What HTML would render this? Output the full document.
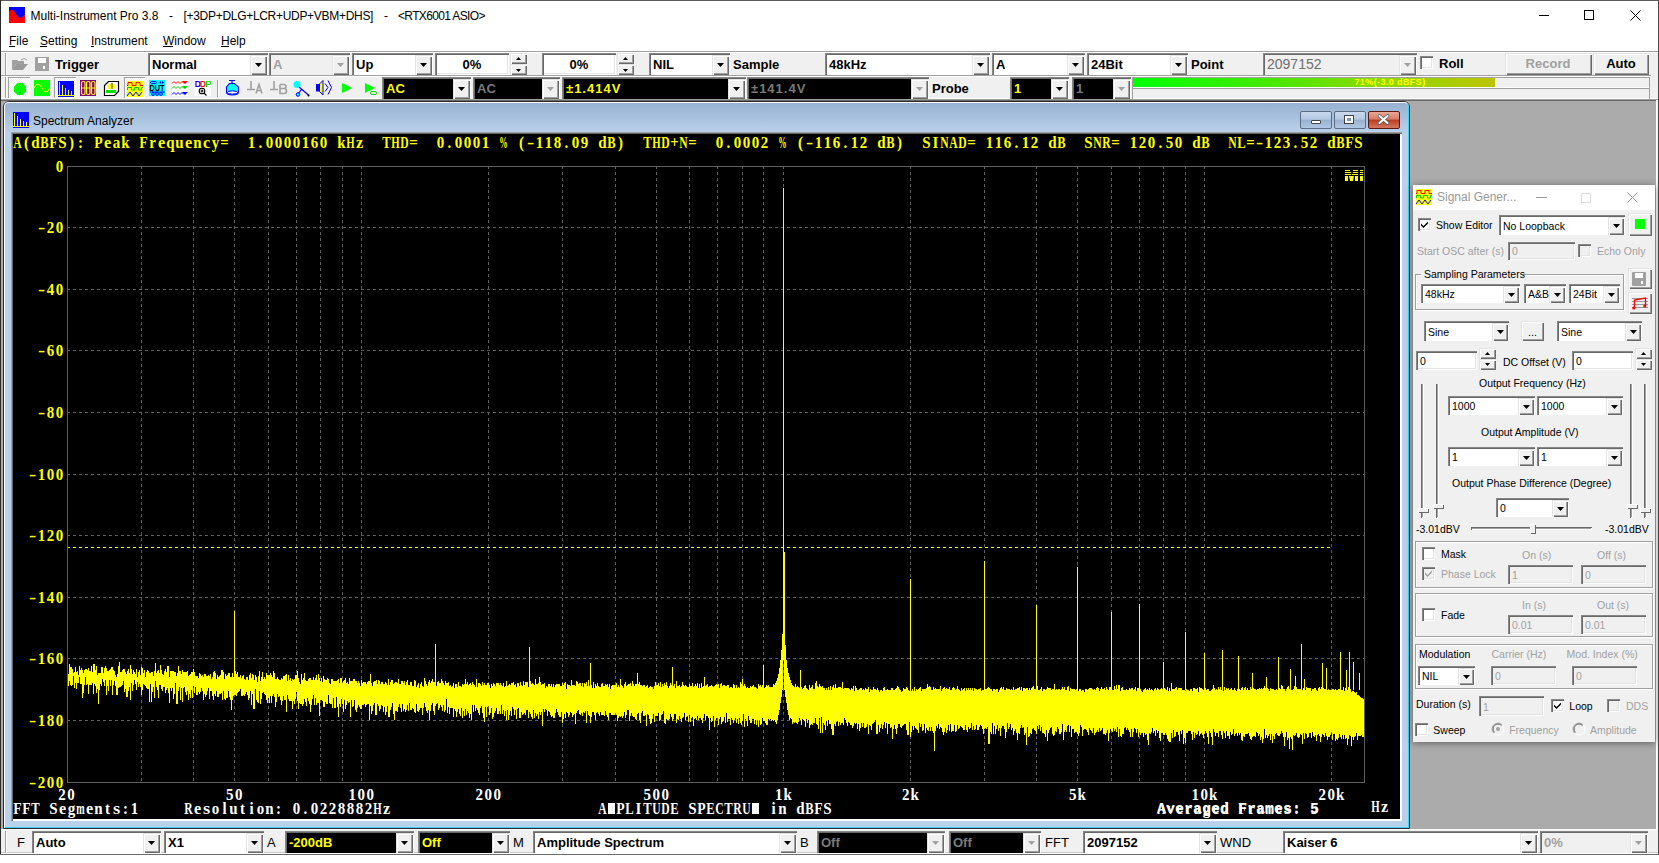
<!DOCTYPE html><html><head><meta charset="utf-8"><style>
html,body{margin:0;padding:0;width:1659px;height:863px;overflow:hidden;background:#fff;position:relative;font-family:"Liberation Sans",sans-serif;}
div{position:absolute;}
</style></head><body>
<div style="left:0px;top:0px;width:1659px;height:855px;background:#fff;"></div>
<div style="left:0px;top:0px;width:1659px;height:1px;background:#5c5c5c;"></div>
<div style="left:0px;top:0px;width:1px;height:855px;background:#2a2a2a;"></div>
<div style="left:1658px;top:0px;width:1px;height:855px;background:#4a4a4a;"></div>
<svg style="position:absolute;left:9px;top:7px;overflow:visible" width="16" height="16" viewBox="0 0 16 16"><rect width="16" height="16" fill="#0000ff"/><path d="M0 5 Q2.5 1.5 4.5 3.5 L9.5 10 Q11 11.5 13 10 L16 7.5 V16 H0 Z" fill="#ff0000"/></svg>
<div style="left:30.50px;top:9.84px;font-family:'Liberation Sans',sans-serif;font-size:12px;line-height:12px;white-space:pre;color:#000;">Multi-Instrument Pro 3.8</div>
<div style="left:169.00px;top:9.84px;font-family:'Liberation Sans',sans-serif;font-size:12px;line-height:12px;white-space:pre;color:#000;">-</div>
<div style="left:183.50px;top:9.84px;font-family:'Liberation Sans',sans-serif;font-size:12px;line-height:12px;white-space:pre;color:#000;letter-spacing:-0.3px;">[+3DP+DLG+LCR+UDP+VBM+DHS]</div>
<div style="left:384.00px;top:9.84px;font-family:'Liberation Sans',sans-serif;font-size:12px;line-height:12px;white-space:pre;color:#000;">-</div>
<div style="left:398.00px;top:9.84px;font-family:'Liberation Sans',sans-serif;font-size:12px;line-height:12px;white-space:pre;color:#000;letter-spacing:-0.65px;">&lt;RTX6001 ASIO&gt;</div>
<div style="left:1539px;top:15px;width:10px;height:1px;background:#000;"></div>
<div style="left:1584px;top:10px;width:10px;height:10px;border:1px solid #000;box-sizing:border-box;"></div>
<svg style="position:absolute;left:1630px;top:10px;overflow:visible" width="11" height="11" viewBox="0 0 11 11"><path d="M0.5 0.5 L10.5 10.5 M10.5 0.5 L0.5 10.5" stroke="#000" stroke-width="1"/></svg>
<div style="left:9.00px;top:34.84px;font-family:'Liberation Sans',sans-serif;font-size:12px;line-height:12px;white-space:pre;color:#000;">File</div>
<div style="left:40.00px;top:34.84px;font-family:'Liberation Sans',sans-serif;font-size:12px;line-height:12px;white-space:pre;color:#000;">Setting</div>
<div style="left:91.00px;top:34.84px;font-family:'Liberation Sans',sans-serif;font-size:12px;line-height:12px;white-space:pre;color:#000;">Instrument</div>
<div style="left:163.00px;top:34.84px;font-family:'Liberation Sans',sans-serif;font-size:12px;line-height:12px;white-space:pre;color:#000;">Window</div>
<div style="left:221.00px;top:34.84px;font-family:'Liberation Sans',sans-serif;font-size:12px;line-height:12px;white-space:pre;color:#000;">Help</div>
<div style="left:9px;top:46px;width:6px;height:1px;background:#000;"></div>
<div style="left:40px;top:46px;width:7px;height:1px;background:#000;"></div>
<div style="left:91px;top:46px;width:3px;height:1px;background:#000;"></div>
<div style="left:163px;top:46px;width:10px;height:1px;background:#000;"></div>
<div style="left:221px;top:46px;width:8px;height:1px;background:#000;"></div>
<div style="left:1px;top:51px;width:1657px;height:1px;background:#a0a0a0;"></div>
<div style="left:1px;top:52px;width:1657px;height:47px;background:#f0f0f0;"></div>
<div style="left:1px;top:52px;width:1657px;height:1px;background:#fff;"></div>
<div style="left:1px;top:75px;width:1650px;height:1px;background:#a0a0a0;"></div>
<div style="left:1px;top:76px;width:1650px;height:1px;background:#fff;"></div>
<div style="left:1px;top:98px;width:1657px;height:1px;background:#fff;"></div>
<div style="left:1px;top:99px;width:1657px;height:1px;background:#a0a0a0;"></div>
<div style="left:5px;top:53px;width:1px;height:22px;background:#a0a0a0;"></div>
<div style="left:6px;top:53px;width:1px;height:22px;background:#fff;"></div>
<div style="left:5px;top:77px;width:1px;height:21px;background:#a0a0a0;"></div>
<div style="left:6px;top:77px;width:1px;height:21px;background:#fff;"></div>
<svg style="position:absolute;left:12px;top:57px;overflow:visible" width="16" height="14" viewBox="0 0 16 14"><path d="M0 3 L5 3 L6 4 L12 4 L12 7 L4 7 L0 13 Z" fill="#a0a0a0"/><path d="M4 7 L16 7 L11 13 L0 13 Z" fill="#9a9a9a"/><path d="M9 3 Q12 0 15 3" stroke="#a0a0a0" fill="none" stroke-width="1"/></svg>
<svg style="position:absolute;left:35px;top:57px;overflow:visible" width="16" height="14" viewBox="0 0 16 14"><rect x="0" y="0" width="14" height="14" fill="#a0a0a0"/><rect x="3" y="1" width="8" height="5" fill="#fff"/><rect x="8" y="9" width="2" height="3" fill="#fff"/></svg>
<div style="left:55.00px;top:58.00px;font-family:'Liberation Sans',sans-serif;font-size:13px;line-height:13px;white-space:pre;font-weight:bold;color:#000;">Trigger</div>
<div style="left:148px;top:53px;width:120px;height:22px;background:#fff;box-shadow:inset 1px 1px 0 #868686, inset 2px 2px 0 #696969, inset -1px 0 0 #fff;"></div>
<div style="left:250px;top:55px;width:17px;height:20px;background:#f0f0f0;box-shadow:inset 1px 1px 0 #e3e3e3, inset 2px 2px 0 #fff, inset -1px -1px 0 #696969, inset -2px -2px 0 #a0a0a0;box-sizing:border-box;"></div>
<svg style="position:absolute;left:255.0px;top:63.0px" width="7" height="4"><path d="M0 0H7L3.5 4Z" fill="#000"/></svg>
<div style="left:152.00px;top:57.68px;font-family:'Liberation Sans',sans-serif;font-size:13px;line-height:13px;white-space:pre;color:#000;letter-spacing:0px;font-weight:bold;">Normal</div>
<div style="left:269px;top:53px;width:81px;height:22px;background:#f0f0f0;box-shadow:inset 1px 1px 0 #868686, inset 2px 2px 0 #696969, inset -1px 0 0 #fff;"></div>
<div style="left:332px;top:55px;width:17px;height:20px;background:#f0f0f0;box-shadow:inset 1px 1px 0 #e3e3e3, inset 2px 2px 0 #fff, inset -1px -1px 0 #696969, inset -2px -2px 0 #a0a0a0;box-sizing:border-box;"></div>
<svg style="position:absolute;left:337.0px;top:63.0px" width="7" height="4"><path d="M0 0H7L3.5 4Z" fill="#a0a0a0"/></svg>
<div style="left:273.00px;top:57.68px;font-family:'Liberation Sans',sans-serif;font-size:13px;line-height:13px;white-space:pre;color:#a0a0a0;letter-spacing:0px;font-weight:bold;">A</div>
<div style="left:352px;top:53px;width:81px;height:22px;background:#fff;box-shadow:inset 1px 1px 0 #868686, inset 2px 2px 0 #696969, inset -1px 0 0 #fff;"></div>
<div style="left:415px;top:55px;width:17px;height:20px;background:#f0f0f0;box-shadow:inset 1px 1px 0 #e3e3e3, inset 2px 2px 0 #fff, inset -1px -1px 0 #696969, inset -2px -2px 0 #a0a0a0;box-sizing:border-box;"></div>
<svg style="position:absolute;left:420.0px;top:63.0px" width="7" height="4"><path d="M0 0H7L3.5 4Z" fill="#000"/></svg>
<div style="left:356.00px;top:57.68px;font-family:'Liberation Sans',sans-serif;font-size:13px;line-height:13px;white-space:pre;color:#000;letter-spacing:0px;font-weight:bold;">Up</div>
<div style="left:435px;top:53px;width:74px;height:22px;background:#fff;border-style:solid;border-width:0;box-shadow:inset 1px 1px 0 #868686, inset 2px 2px 0 #696969, inset -1px -1px 0 #fff, inset -2px -2px 0 #e3e3e3;box-sizing:border-box;"></div>
<div style="left:435.00px;top:58.00px;font-family:'Liberation Sans',sans-serif;font-size:13px;line-height:13px;white-space:pre;width:74px;text-align:center;font-weight:bold;color:#000;">0%</div>
<div style="left:510px;top:53px;width:17px;height:11px;background:#f0f0f0;box-shadow:inset 1px 1px 0 #e3e3e3, inset 2px 2px 0 #fff, inset -1px -1px 0 #696969, inset -2px -2px 0 #a0a0a0;box-sizing:border-box;"></div>
<div style="left:510px;top:64px;width:17px;height:11px;background:#f0f0f0;box-shadow:inset 1px 1px 0 #e3e3e3, inset 2px 2px 0 #fff, inset -1px -1px 0 #696969, inset -2px -2px 0 #a0a0a0;box-sizing:border-box;"></div>
<svg style="position:absolute;left:516px;top:57px;overflow:visible" width="5" height="15" viewBox="0 0 5 15"><path d="M2.5 0 L5 3 L0 3 Z" fill="#000"/><path d="M0 12 L5 12 L2.5 15 Z" fill="#000"/></svg>
<div style="left:542px;top:53px;width:74px;height:22px;background:#fff;border-style:solid;border-width:0;box-shadow:inset 1px 1px 0 #868686, inset 2px 2px 0 #696969, inset -1px -1px 0 #fff, inset -2px -2px 0 #e3e3e3;box-sizing:border-box;"></div>
<div style="left:542.00px;top:58.00px;font-family:'Liberation Sans',sans-serif;font-size:13px;line-height:13px;white-space:pre;width:74px;text-align:center;font-weight:bold;color:#000;">0%</div>
<div style="left:617px;top:53px;width:17px;height:11px;background:#f0f0f0;box-shadow:inset 1px 1px 0 #e3e3e3, inset 2px 2px 0 #fff, inset -1px -1px 0 #696969, inset -2px -2px 0 #a0a0a0;box-sizing:border-box;"></div>
<div style="left:617px;top:64px;width:17px;height:11px;background:#f0f0f0;box-shadow:inset 1px 1px 0 #e3e3e3, inset 2px 2px 0 #fff, inset -1px -1px 0 #696969, inset -2px -2px 0 #a0a0a0;box-sizing:border-box;"></div>
<svg style="position:absolute;left:623px;top:57px;overflow:visible" width="5" height="15" viewBox="0 0 5 15"><path d="M2.5 0 L5 3 L0 3 Z" fill="#000"/><path d="M0 12 L5 12 L2.5 15 Z" fill="#000"/></svg>
<div style="left:649px;top:53px;width:81px;height:22px;background:#fff;box-shadow:inset 1px 1px 0 #868686, inset 2px 2px 0 #696969, inset -1px 0 0 #fff;"></div>
<div style="left:712px;top:55px;width:17px;height:20px;background:#f0f0f0;box-shadow:inset 1px 1px 0 #e3e3e3, inset 2px 2px 0 #fff, inset -1px -1px 0 #696969, inset -2px -2px 0 #a0a0a0;box-sizing:border-box;"></div>
<svg style="position:absolute;left:717.0px;top:63.0px" width="7" height="4"><path d="M0 0H7L3.5 4Z" fill="#000"/></svg>
<div style="left:653.00px;top:57.68px;font-family:'Liberation Sans',sans-serif;font-size:13px;line-height:13px;white-space:pre;color:#000;letter-spacing:0px;font-weight:bold;">NIL</div>
<div style="left:733.00px;top:58.00px;font-family:'Liberation Sans',sans-serif;font-size:13px;line-height:13px;white-space:pre;font-weight:bold;color:#000;">Sample</div>
<div style="left:825px;top:53px;width:165px;height:22px;background:#fff;box-shadow:inset 1px 1px 0 #868686, inset 2px 2px 0 #696969, inset -1px 0 0 #fff;"></div>
<div style="left:972px;top:55px;width:17px;height:20px;background:#f0f0f0;box-shadow:inset 1px 1px 0 #e3e3e3, inset 2px 2px 0 #fff, inset -1px -1px 0 #696969, inset -2px -2px 0 #a0a0a0;box-sizing:border-box;"></div>
<svg style="position:absolute;left:977.0px;top:63.0px" width="7" height="4"><path d="M0 0H7L3.5 4Z" fill="#000"/></svg>
<div style="left:829.00px;top:57.68px;font-family:'Liberation Sans',sans-serif;font-size:13px;line-height:13px;white-space:pre;color:#000;letter-spacing:0px;font-weight:bold;">48kHz</div>
<div style="left:992px;top:53px;width:93px;height:22px;background:#fff;box-shadow:inset 1px 1px 0 #868686, inset 2px 2px 0 #696969, inset -1px 0 0 #fff;"></div>
<div style="left:1067px;top:55px;width:17px;height:20px;background:#f0f0f0;box-shadow:inset 1px 1px 0 #e3e3e3, inset 2px 2px 0 #fff, inset -1px -1px 0 #696969, inset -2px -2px 0 #a0a0a0;box-sizing:border-box;"></div>
<svg style="position:absolute;left:1072.0px;top:63.0px" width="7" height="4"><path d="M0 0H7L3.5 4Z" fill="#000"/></svg>
<div style="left:996.00px;top:57.68px;font-family:'Liberation Sans',sans-serif;font-size:13px;line-height:13px;white-space:pre;color:#000;letter-spacing:0px;font-weight:bold;">A</div>
<div style="left:1087px;top:53px;width:101px;height:22px;background:#fff;box-shadow:inset 1px 1px 0 #868686, inset 2px 2px 0 #696969, inset -1px 0 0 #fff;"></div>
<div style="left:1170px;top:55px;width:17px;height:20px;background:#f0f0f0;box-shadow:inset 1px 1px 0 #e3e3e3, inset 2px 2px 0 #fff, inset -1px -1px 0 #696969, inset -2px -2px 0 #a0a0a0;box-sizing:border-box;"></div>
<svg style="position:absolute;left:1175.0px;top:63.0px" width="7" height="4"><path d="M0 0H7L3.5 4Z" fill="#000"/></svg>
<div style="left:1091.00px;top:57.68px;font-family:'Liberation Sans',sans-serif;font-size:13px;line-height:13px;white-space:pre;color:#000;letter-spacing:0px;font-weight:bold;">24Bit</div>
<div style="left:1191.00px;top:58.00px;font-family:'Liberation Sans',sans-serif;font-size:13px;line-height:13px;white-space:pre;font-weight:bold;color:#000;">Point</div>
<div style="left:1263px;top:53px;width:154px;height:22px;background:#f0f0f0;box-shadow:inset 1px 1px 0 #868686, inset 2px 2px 0 #696969, inset -1px 0 0 #fff;"></div>
<div style="left:1399px;top:55px;width:17px;height:20px;background:#f0f0f0;box-shadow:inset 1px 1px 0 #e3e3e3, inset 2px 2px 0 #fff, inset -1px -1px 0 #696969, inset -2px -2px 0 #a0a0a0;box-sizing:border-box;"></div>
<svg style="position:absolute;left:1404.0px;top:63.0px" width="7" height="4"><path d="M0 0H7L3.5 4Z" fill="#a0a0a0"/></svg>
<div style="left:1267.00px;top:57.19px;font-family:'Liberation Sans',sans-serif;font-size:14px;line-height:14px;white-space:pre;color:#6d6d6d;letter-spacing:0px;">2097152</div>
<div style="left:1420px;top:56px;width:13px;height:13px;background:#fff;border-style:solid;border-width:0;box-shadow:inset 1px 1px 0 #868686, inset 2px 2px 0 #696969, inset -1px -1px 0 #fff, inset -2px -2px 0 #e3e3e3;box-sizing:border-box;"></div>
<div style="left:1439.00px;top:57.00px;font-family:'Liberation Sans',sans-serif;font-size:13px;line-height:13px;white-space:pre;font-weight:bold;color:#000;">Roll</div>
<div style="left:1505px;top:53px;width:87px;height:22px;background:#f0f0f0;box-shadow:inset 1px 1px 0 #e3e3e3, inset 2px 2px 0 #fff, inset -1px -1px 0 #696969, inset -2px -2px 0 #a0a0a0;box-sizing:border-box;"></div>
<div style="left:1504.50px;top:57.00px;font-family:'Liberation Sans',sans-serif;font-size:13px;line-height:13px;white-space:pre;width:87px;text-align:center;font-weight:bold;color:#a0a0a0;">Record</div>
<div style="left:1593px;top:53px;width:56px;height:22px;background:#f0f0f0;box-shadow:inset 1px 1px 0 #e3e3e3, inset 2px 2px 0 #fff, inset -1px -1px 0 #696969, inset -2px -2px 0 #a0a0a0;box-sizing:border-box;"></div>
<div style="left:1593.00px;top:57.00px;font-family:'Liberation Sans',sans-serif;font-size:13px;line-height:13px;white-space:pre;width:56px;text-align:center;font-weight:bold;color:#000;">Auto</div>
<div style="left:8px;top:77px;width:22px;height:21px;background:repeating-conic-gradient(#f0f0f0 0% 25%, #fff 0% 50%) 0 0/2px 2px;box-shadow:inset 1px 1px 0 #a0a0a0, inset -1px -1px 0 #fff;"></div>
<svg style="position:absolute;left:14px;top:83px;overflow:visible" width="12" height="12" viewBox="0 0 12 12"><path d="M3.5 0 L8.5 0 L12 3.5 L12 8.5 L8.5 12 L3.5 12 L0 8.5 L0 3.5 Z" fill="#00ff00"/></svg>
<svg style="position:absolute;left:34px;top:80px;overflow:visible" width="16" height="16" viewBox="0 0 16 16"><rect width="16" height="16" fill="#00ff00"/><path d="M0 8 Q4 0 8 8 T16 8" stroke="#ffff00" fill="none" stroke-width="1"/></svg>
<div style="left:54px;top:77px;width:22px;height:21px;background:repeating-conic-gradient(#f0f0f0 0% 25%, #fff 0% 50%) 0 0/2px 2px;box-shadow:inset 1px 1px 0 #a0a0a0, inset -1px -1px 0 #fff;"></div>
<svg style="position:absolute;left:58px;top:81px;overflow:visible" width="16" height="16" viewBox="0 0 16 16"><rect width="16" height="16" fill="#0000ff"/><path d="M1.5 1 V14 M4.5 4 V14 M7.5 7 V14 M10.5 9 V14 M13.5 10 V14 M0 14.5 H16" stroke="#ffff00" stroke-width="1"/></svg>
<svg style="position:absolute;left:80px;top:80px;overflow:visible" width="16" height="16" viewBox="0 0 16 16"><rect width="16" height="16" fill="#800080"/><rect x="1.5" y="1.5" width="3.5" height="13" rx="1.5" stroke="#ffff00" fill="none" stroke-width="1.2"/><rect x="6.5" y="1.5" width="3.5" height="13" rx="1.5" stroke="#ffff00" fill="none" stroke-width="1.2"/><rect x="11.5" y="1.5" width="3.5" height="13" rx="1.5" stroke="#ffff00" fill="none" stroke-width="1.2"/><path d="M1.5 8H5M6.5 8H10M11.5 8H15" stroke="#ffff00" stroke-width="1.2"/></svg>
<svg style="position:absolute;left:104px;top:81px;overflow:visible" width="15" height="15" viewBox="0 0 15 15"><path d="M4.5 0.5 H14.5 V10.5 L10.5 14.5 H0.5 V4.5 Z" fill="#fff" stroke="#000" stroke-width="1.2"/><path d="M5 3 L8 2 L10 3 L12 6 L10 8 L4 8 L3 6 Z" fill="#ffff00"/><path d="M8 2 L8 8" stroke="#000" stroke-width="0.8"/><path d="M2 9 H12 V12 H2 Z" fill="#00e000"/></svg>
<div style="left:124px;top:77px;width:21px;height:21px;background:repeating-conic-gradient(#f0f0f0 0% 25%, #fff 0% 50%) 0 0/2px 2px;box-shadow:inset 1px 1px 0 #a0a0a0, inset -1px -1px 0 #fff;"></div>
<svg style="position:absolute;left:127px;top:81px;overflow:visible" width="16" height="16" viewBox="0 0 16 16"><rect width="16" height="16" fill="#ffff00"/><path d="M0 4.5 H1 V1.5 H5 V4.5 H9 V1.5 H13 V4.5 H16" stroke="#ff0000" fill="none"/><path d="M0.5 9 V6.5 H4.5 V9 H7.5 V6.5 H11.5 V9 H14.5 V6.5 H16" stroke="#00d000" fill="none"/><path d="M0 15 L3 11 L6 15 L9 11 L12 15 L15 11" stroke="#0000ff" fill="none"/></svg>
<svg style="position:absolute;left:149px;top:80px;overflow:visible" width="16" height="16" viewBox="0 0 16 16"><rect width="16" height="16" fill="#00ffff"/><rect x="1.5" y="1.5" width="6" height="2" rx="1" fill="none" stroke="#0000ff"/><path d="M10 2.5 L12 1 V4 Z M15 2.5 L13 1 V4 Z" fill="#0000ff"/><text x="8" y="11" font-family="Liberation Sans" font-size="8.5" font-weight="bold" fill="#000" text-anchor="middle" textLength="15" lengthAdjust="spacingAndGlyphs">DUT</text><rect x="1" y="11.5" width="15" height="1" fill="#0000ff"/><ellipse cx="4" cy="14" rx="1.3" ry="1.5" fill="none" stroke="#0000ff"/><ellipse cx="8" cy="14" rx="1.3" ry="1.5" fill="none" stroke="#0000ff"/><ellipse cx="12" cy="14" rx="1.3" ry="1.5" fill="none" stroke="#0000ff"/></svg>
<svg style="position:absolute;left:172px;top:80px;overflow:visible" width="16" height="16" viewBox="0 0 16 16"><rect width="16" height="16" fill="#fff"/><path d="M0 3.5 L2 1.5 L4 3.5 L6 1.5 L8 3.5 L10 1.5 L12 3.5" stroke="#ff0000" fill="none"/><path d="M10 1 H16 L13 4 Z" fill="#ff0000"/><path d="M0 8.5 L2 6.5 L4 8.5 L6 6.5 L8 8.5 L10 6.5 L12 8.5" stroke="#00d000" fill="none"/><path d="M10 6 H16 L13 9 Z" fill="#00d000"/><path d="M0 14.5 L2 12.5 L4 14.5 L6 12.5 L8 14.5 L10 12.5 L12 14.5" stroke="#0000ff" fill="none"/><path d="M10 12 H16 L13 15 Z" fill="#0000ff"/></svg>
<svg style="position:absolute;left:195px;top:80px;overflow:visible" width="16" height="16" viewBox="0 0 16 16"><rect width="16" height="16" fill="#fff"/><path d="M1 1.5 H3 Q5 1.5 5 4 Q5 6.5 3 6.5 H1 Z" fill="none" stroke="#0000ff" stroke-width="1.2"/><path d="M6 1.5 H8 Q10 1.5 10 4 Q10 6.5 8 6.5 H6 Z" fill="none" stroke="#ff0000" stroke-width="1.2"/><path d="M11.5 7 V1.5 H14 Q15.5 1.5 15.5 3 Q15.5 4.5 14 4.5 H11.5" fill="none" stroke="#00e000" stroke-width="1.2"/><circle cx="7" cy="11" r="2.8" stroke="#000" fill="none" stroke-width="1.1"/><path d="M9 13 L11.5 15.5 M5.5 11 H8.5 M7 9.5 V12.5" stroke="#000" stroke-width="1.1"/></svg>
<div style="left:217px;top:80px;width:1px;height:17px;background:#a0a0a0;"></div>
<div style="left:218px;top:80px;width:1px;height:17px;background:#fff;"></div>
<svg style="position:absolute;left:226px;top:80px;overflow:visible" width="13" height="16" viewBox="0 0 13 16"><path d="M3 0.5 H9 M6 0.5 V3.5" stroke="#0000ff" stroke-width="1.2"/><path d="M3.5 3.5 H8.5 L12.5 7 V12 Q12.5 15 6 15 Q0.5 15 0.5 12 V7 Z" fill="#00ffff" stroke="#0000ff" stroke-width="1.1"/><ellipse cx="6.5" cy="12.5" rx="5" ry="1.6" fill="#ffffe0" stroke="#0000ff" stroke-width="1"/></svg>
<svg style="position:absolute;left:247px;top:81px;overflow:visible" width="17" height="13" viewBox="0 0 17 13"><path d="M4 0 V8 M0 8.5 H8" stroke="#a0a0a0" stroke-width="1.6"/><path d="M9 12.5 L12 3.5 L15 12.5 M10 9.5 H14" stroke="#a0a0a0" stroke-width="1.6" fill="none"/></svg>
<svg style="position:absolute;left:270px;top:81px;overflow:visible" width="17" height="13" viewBox="0 0 17 13"><path d="M4 0 V8 M0 8.5 H8" stroke="#a0a0a0" stroke-width="1.6"/><path d="M10 3.5 H14 Q16 3.5 16 5.5 Q16 7.5 14 7.5 H10 M10 7.5 H14.5 Q16.5 7.5 16.5 10 Q16.5 12.5 14.5 12.5 H10 Z M10 3.5 V12.5" stroke="#a0a0a0" stroke-width="1.6" fill="none"/></svg>
<svg style="position:absolute;left:293px;top:80px;overflow:visible" width="17" height="17" viewBox="0 0 17 17"><circle cx="4" cy="4.5" r="3.5" fill="#00ffff"/><path d="M6 7 L16 15.5 M8.5 9.5 L5 14" stroke="#0000ff" stroke-width="1.2"/><circle cx="15.5" cy="15.5" r="1" fill="#000"/><circle cx="5" cy="14.5" r="1.8" fill="#00ffff" stroke="#0000ff"/></svg>
<svg style="position:absolute;left:316px;top:80px;overflow:visible" width="17" height="16" viewBox="0 0 17 16"><rect x="0" y="4" width="3.5" height="7.5" fill="#0000ff"/><path d="M3.5 4 L7 0.5 V15 L3.5 11.5 Z" fill="#ffff00" stroke="#0000ff" stroke-width="1"/><path d="M9 3.5 L12 7.5 L9 11.5 M12 0.5 L15.5 7.5 L12 14.5" stroke="#0000ff" fill="none" stroke-width="1"/></svg>
<svg style="position:absolute;left:342px;top:83px;overflow:visible" width="11" height="10" viewBox="0 0 11 10"><path d="M0 0 L10 5 L0 10 Z" fill="#00ff00"/></svg>
<svg style="position:absolute;left:365px;top:83px;overflow:visible" width="12" height="12" viewBox="0 0 12 12"><path d="M0 0 L10 5 L0 10 Z" fill="#00ff00"/><rect x="5.5" y="8.5" width="6" height="3" rx="1.5" fill="none" stroke="#00e000" stroke-width="1"/></svg>
<div style="left:382px;top:77px;width:89px;height:22px;background:#000;box-shadow:inset 1px 1px 0 #868686, inset 2px 2px 0 #696969, inset -1px 0 0 #fff;"></div>
<div style="left:453px;top:79px;width:17px;height:20px;background:#f0f0f0;box-shadow:inset 1px 1px 0 #e3e3e3, inset 2px 2px 0 #fff, inset -1px -1px 0 #696969, inset -2px -2px 0 #a0a0a0;box-sizing:border-box;"></div>
<svg style="position:absolute;left:458.0px;top:87.0px" width="7" height="4"><path d="M0 0H7L3.5 4Z" fill="#000"/></svg>
<div style="left:386.00px;top:81.68px;font-family:'Liberation Sans',sans-serif;font-size:13px;line-height:13px;white-space:pre;color:#ffff00;letter-spacing:0px;font-weight:bold;">AC</div>
<div style="left:473px;top:77px;width:87px;height:22px;background:#000;box-shadow:inset 1px 1px 0 #868686, inset 2px 2px 0 #696969, inset -1px 0 0 #fff;"></div>
<div style="left:542px;top:79px;width:17px;height:20px;background:#f0f0f0;box-shadow:inset 1px 1px 0 #e3e3e3, inset 2px 2px 0 #fff, inset -1px -1px 0 #696969, inset -2px -2px 0 #a0a0a0;box-sizing:border-box;"></div>
<svg style="position:absolute;left:547.0px;top:87.0px" width="7" height="4"><path d="M0 0H7L3.5 4Z" fill="#a0a0a0"/></svg>
<div style="left:477.00px;top:81.68px;font-family:'Liberation Sans',sans-serif;font-size:13px;line-height:13px;white-space:pre;color:#7a7a7a;letter-spacing:0px;font-weight:bold;">AC</div>
<div style="left:562px;top:77px;width:184px;height:22px;background:#000;box-shadow:inset 1px 1px 0 #868686, inset 2px 2px 0 #696969, inset -1px 0 0 #fff;"></div>
<div style="left:728px;top:79px;width:17px;height:20px;background:#f0f0f0;box-shadow:inset 1px 1px 0 #e3e3e3, inset 2px 2px 0 #fff, inset -1px -1px 0 #696969, inset -2px -2px 0 #a0a0a0;box-sizing:border-box;"></div>
<svg style="position:absolute;left:733.0px;top:87.0px" width="7" height="4"><path d="M0 0H7L3.5 4Z" fill="#000"/></svg>
<div style="left:566.00px;top:81.68px;font-family:'Liberation Sans',sans-serif;font-size:13px;line-height:13px;white-space:pre;color:#ffff00;letter-spacing:1px;font-weight:bold;">±1.414V</div>
<div style="left:747px;top:77px;width:182px;height:22px;background:#000;box-shadow:inset 1px 1px 0 #868686, inset 2px 2px 0 #696969, inset -1px 0 0 #fff;"></div>
<div style="left:911px;top:79px;width:17px;height:20px;background:#f0f0f0;box-shadow:inset 1px 1px 0 #e3e3e3, inset 2px 2px 0 #fff, inset -1px -1px 0 #696969, inset -2px -2px 0 #a0a0a0;box-sizing:border-box;"></div>
<svg style="position:absolute;left:916.0px;top:87.0px" width="7" height="4"><path d="M0 0H7L3.5 4Z" fill="#a0a0a0"/></svg>
<div style="left:751.00px;top:81.68px;font-family:'Liberation Sans',sans-serif;font-size:13px;line-height:13px;white-space:pre;color:#7a7a7a;letter-spacing:1px;font-weight:bold;">±141.4V</div>
<div style="left:932.00px;top:82.00px;font-family:'Liberation Sans',sans-serif;font-size:13px;line-height:13px;white-space:pre;font-weight:bold;color:#000;">Probe</div>
<div style="left:1010px;top:77px;width:59px;height:22px;background:#000;box-shadow:inset 1px 1px 0 #868686, inset 2px 2px 0 #696969, inset -1px 0 0 #fff;"></div>
<div style="left:1051px;top:79px;width:17px;height:20px;background:#f0f0f0;box-shadow:inset 1px 1px 0 #e3e3e3, inset 2px 2px 0 #fff, inset -1px -1px 0 #696969, inset -2px -2px 0 #a0a0a0;box-sizing:border-box;"></div>
<svg style="position:absolute;left:1056.0px;top:87.0px" width="7" height="4"><path d="M0 0H7L3.5 4Z" fill="#000"/></svg>
<div style="left:1014.00px;top:81.68px;font-family:'Liberation Sans',sans-serif;font-size:13px;line-height:13px;white-space:pre;color:#ffff00;letter-spacing:0px;font-weight:bold;">1</div>
<div style="left:1072px;top:77px;width:59px;height:22px;background:#000;box-shadow:inset 1px 1px 0 #868686, inset 2px 2px 0 #696969, inset -1px 0 0 #fff;"></div>
<div style="left:1113px;top:79px;width:17px;height:20px;background:#f0f0f0;box-shadow:inset 1px 1px 0 #e3e3e3, inset 2px 2px 0 #fff, inset -1px -1px 0 #696969, inset -2px -2px 0 #a0a0a0;box-sizing:border-box;"></div>
<svg style="position:absolute;left:1118.0px;top:87.0px" width="7" height="4"><path d="M0 0H7L3.5 4Z" fill="#a0a0a0"/></svg>
<div style="left:1076.00px;top:81.68px;font-family:'Liberation Sans',sans-serif;font-size:13px;line-height:13px;white-space:pre;color:#7a7a7a;letter-spacing:0px;font-weight:bold;">1</div>
<div style="left:1132px;top:77px;width:518px;height:22px;background:#f0f0f0;border-left:1px solid #a0a0a0;border-right:1px solid #a0a0a0;box-sizing:border-box;"></div>
<div style="left:1132px;top:77px;width:518px;height:1px;background:#a0a0a0;"></div>
<div style="left:1133px;top:87px;width:516px;height:1px;background:#fff;"></div>
<div style="left:1132px;top:88px;width:518px;height:1px;background:#a0a0a0;"></div>
<div style="left:1133px;top:98px;width:516px;height:1px;background:#fff;"></div>
<div style="left:1133px;top:78px;width:362px;height:9px;background:linear-gradient(to right,#00ff00,#40ea00 35%,#90d800 70%,#bcc400);"></div>
<div style="left:1330.00px;top:78.38px;font-family:'Liberation Sans',sans-serif;font-size:9px;line-height:9px;white-space:pre;width:120px;text-align:center;color:#ffff00;font-weight:bold;letter-spacing:0.4px;">71%(-3.0 dBFS)</div>
<div style="left:1px;top:100px;width:1657px;height:729px;background:#ababab;"></div>
<div style="left:1px;top:100px;width:1657px;height:1px;background:#696969;"></div>
<div style="left:1656px;top:100px;width:2px;height:729px;background:#f0f0f0;"></div>
<div style="left:1656px;top:100px;width:1px;height:729px;background:#fff;"></div>
<div style="left:3px;top:101px;width:1407px;height:728px;background:#b9d1ea;border-radius:6px 6px 0 0;"></div>
<div style="left:3px;top:101px;width:1407px;height:728px;border:1px solid #2b2b2b;box-sizing:border-box;border-radius:6px 6px 0 0;"></div>
<div style="left:4px;top:102px;width:1405px;height:726px;border:1px solid #fff;border-right-color:#3ad2f6;border-bottom-color:#3ad2f6;box-sizing:border-box;border-radius:5px 5px 0 0;"></div>
<div style="left:5px;top:103px;width:1403px;height:29px;background:linear-gradient(#97b1d1,#b8d0ea);border-radius:4px 4px 0 0;"></div>
<div style="left:5px;top:132px;width:1401px;height:690px;background:#b9d1ea;"></div>
<svg style="position:absolute;left:13px;top:112px;overflow:visible" width="16" height="16" viewBox="0 0 16 16"><rect width="16" height="16" fill="#0000ff"/><path d="M1.5 1 V14 M4.5 4 V14 M7.5 7 V14 M10.5 9 V14 M13.5 10 V14 M0 14.5 H16" stroke="#ffff00" stroke-width="1"/></svg>
<div style="left:33.00px;top:114.84px;font-family:'Liberation Sans',sans-serif;font-size:12px;line-height:12px;white-space:pre;color:#000;">Spectrum Analyzer</div>
<div style="left:1300px;top:111px;width:32px;height:18px;background:linear-gradient(#c9daee 0%,#b4c9e3 45%,#98b1d0 50%,#afc7e3 100%);border:1px solid #5a6b82;box-sizing:border-box;border-radius:2px;"></div>
<div style="left:1334px;top:111px;width:32px;height:18px;background:linear-gradient(#c9daee 0%,#b4c9e3 45%,#98b1d0 50%,#afc7e3 100%);border:1px solid #5a6b82;box-sizing:border-box;border-radius:2px;"></div>
<div style="left:1368px;top:111px;width:32px;height:18px;background:linear-gradient(#e9a99a 0%,#d57b66 45%,#b83a22 50%,#d57961 100%);border:1px solid #5a1a12;box-sizing:border-box;border-radius:2px;"></div>
<div style="left:1311px;top:120px;width:10px;height:4px;background:#fff;border:1px solid #444;box-sizing:border-box;border-radius:1px;"></div>
<div style="left:1344px;top:115px;width:10px;height:9px;background:#fff;border:1px solid #444;box-sizing:border-box;"></div>
<div style="left:1347px;top:118px;width:4px;height:3px;background:#7b95b8;"></div>
<svg style="position:absolute;left:1377px;top:114px;overflow:visible" width="13" height="11" viewBox="0 0 13 11"><path d="M2.5 2 L10.5 9 M10.5 2 L2.5 9" stroke="#555" stroke-width="3.6" stroke-linecap="round"/><path d="M2.5 2 L10.5 9 M10.5 2 L2.5 9" stroke="#fff" stroke-width="2.2" stroke-linecap="round"/></svg>
<div style="left:11px;top:132px;width:1391px;height:689px;background:#000;box-shadow:inset 1px 1px 0 #a0a0a0, inset 2px 2px 0 #696969, inset -1px -1px 0 #fff, inset -2px -2px 0 #fff;box-sizing:border-box;"></div>
<div style="left:13px;top:134px;width:1387px;height:685px;background:#000;"></div>
<svg style="position:absolute;left:0;top:0;overflow:visible" width="1" height="1"><text y="148" font-family="Liberation Serif" font-size="15" font-weight="bold" fill="#ffff00" transform="translate(0 148) scale(1 1.08) translate(0 -148)"><tspan x="13.30" textLength="8.4" lengthAdjust="spacingAndGlyphs">A</tspan><tspan x="24.00">(</tspan><tspan x="31.33">d</tspan><tspan x="40.30" textLength="8.4" lengthAdjust="spacingAndGlyphs">B</tspan><tspan x="49.30" textLength="8.4" lengthAdjust="spacingAndGlyphs">F</tspan><tspan x="58.33">S</tspan><tspan x="69.00">)</tspan><tspan x="78.00">:</tspan><tspan x="94.30" textLength="8.4" lengthAdjust="spacingAndGlyphs">P</tspan><tspan x="103.90" textLength="7.2" lengthAdjust="spacingAndGlyphs">e</tspan><tspan x="112.75">a</tspan><tspan x="121.33">k</tspan><tspan x="139.30" textLength="8.4" lengthAdjust="spacingAndGlyphs">F</tspan><tspan x="149.17">r</tspan><tspan x="157.90" textLength="7.2" lengthAdjust="spacingAndGlyphs">e</tspan><tspan x="166.33">q</tspan><tspan x="175.33">u</tspan><tspan x="184.90" textLength="7.2" lengthAdjust="spacingAndGlyphs">e</tspan><tspan x="193.33">n</tspan><tspan x="202.90" textLength="7.2" lengthAdjust="spacingAndGlyphs">c</tspan><tspan x="211.75">y</tspan><tspan x="220.30" textLength="8.4" lengthAdjust="spacingAndGlyphs">=</tspan><tspan x="247.75">1</tspan><tspan x="258.62">.</tspan><tspan x="265.75">0</tspan><tspan x="274.75">0</tspan><tspan x="283.75">0</tspan><tspan x="292.75">0</tspan><tspan x="301.75">1</tspan><tspan x="310.75">6</tspan><tspan x="319.75">0</tspan><tspan x="337.33">k</tspan><tspan x="346.30" textLength="8.4" lengthAdjust="spacingAndGlyphs">H</tspan><tspan x="355.90" textLength="7.2" lengthAdjust="spacingAndGlyphs">z</tspan><tspan x="382.30" textLength="8.4" lengthAdjust="spacingAndGlyphs">T</tspan><tspan x="391.30" textLength="8.4" lengthAdjust="spacingAndGlyphs">H</tspan><tspan x="400.30" textLength="8.4" lengthAdjust="spacingAndGlyphs">D</tspan><tspan x="409.30" textLength="8.4" lengthAdjust="spacingAndGlyphs">=</tspan><tspan x="436.75">0</tspan><tspan x="447.62">.</tspan><tspan x="454.75">0</tspan><tspan x="463.75">0</tspan><tspan x="472.75">0</tspan><tspan x="481.75">1</tspan><tspan x="499.30" textLength="8.4" lengthAdjust="spacingAndGlyphs">%</tspan><tspan x="519.00">(</tspan><tspan x="526.90" textLength="7.2" lengthAdjust="spacingAndGlyphs">-</tspan><tspan x="535.75">1</tspan><tspan x="544.75">1</tspan><tspan x="553.75">8</tspan><tspan x="564.62">.</tspan><tspan x="571.75">0</tspan><tspan x="580.75">9</tspan><tspan x="598.33">d</tspan><tspan x="607.30" textLength="8.4" lengthAdjust="spacingAndGlyphs">B</tspan><tspan x="618.00">)</tspan><tspan x="643.30" textLength="8.4" lengthAdjust="spacingAndGlyphs">T</tspan><tspan x="652.30" textLength="8.4" lengthAdjust="spacingAndGlyphs">H</tspan><tspan x="661.30" textLength="8.4" lengthAdjust="spacingAndGlyphs">D</tspan><tspan x="670.30" textLength="8.4" lengthAdjust="spacingAndGlyphs">+</tspan><tspan x="679.30" textLength="8.4" lengthAdjust="spacingAndGlyphs">N</tspan><tspan x="688.30" textLength="8.4" lengthAdjust="spacingAndGlyphs">=</tspan><tspan x="715.75">0</tspan><tspan x="726.62">.</tspan><tspan x="733.75">0</tspan><tspan x="742.75">0</tspan><tspan x="751.75">0</tspan><tspan x="760.75">2</tspan><tspan x="778.30" textLength="8.4" lengthAdjust="spacingAndGlyphs">%</tspan><tspan x="798.00">(</tspan><tspan x="805.90" textLength="7.2" lengthAdjust="spacingAndGlyphs">-</tspan><tspan x="814.75">1</tspan><tspan x="823.75">1</tspan><tspan x="832.75">6</tspan><tspan x="843.62">.</tspan><tspan x="850.75">1</tspan><tspan x="859.75">2</tspan><tspan x="877.33">d</tspan><tspan x="886.30" textLength="8.4" lengthAdjust="spacingAndGlyphs">B</tspan><tspan x="897.00">)</tspan><tspan x="922.33">S</tspan><tspan x="932.58">I</tspan><tspan x="940.30" textLength="8.4" lengthAdjust="spacingAndGlyphs">N</tspan><tspan x="949.30" textLength="8.4" lengthAdjust="spacingAndGlyphs">A</tspan><tspan x="958.30" textLength="8.4" lengthAdjust="spacingAndGlyphs">D</tspan><tspan x="967.30" textLength="8.4" lengthAdjust="spacingAndGlyphs">=</tspan><tspan x="985.75">1</tspan><tspan x="994.75">1</tspan><tspan x="1003.75">6</tspan><tspan x="1014.62">.</tspan><tspan x="1021.75">1</tspan><tspan x="1030.75">2</tspan><tspan x="1048.33">d</tspan><tspan x="1057.30" textLength="8.4" lengthAdjust="spacingAndGlyphs">B</tspan><tspan x="1084.33">S</tspan><tspan x="1093.30" textLength="8.4" lengthAdjust="spacingAndGlyphs">N</tspan><tspan x="1102.30" textLength="8.4" lengthAdjust="spacingAndGlyphs">R</tspan><tspan x="1111.30" textLength="8.4" lengthAdjust="spacingAndGlyphs">=</tspan><tspan x="1129.75">1</tspan><tspan x="1138.75">2</tspan><tspan x="1147.75">0</tspan><tspan x="1158.62">.</tspan><tspan x="1165.75">5</tspan><tspan x="1174.75">0</tspan><tspan x="1192.33">d</tspan><tspan x="1201.30" textLength="8.4" lengthAdjust="spacingAndGlyphs">B</tspan><tspan x="1228.30" textLength="8.4" lengthAdjust="spacingAndGlyphs">N</tspan><tspan x="1237.30" textLength="8.4" lengthAdjust="spacingAndGlyphs">L</tspan><tspan x="1246.30" textLength="8.4" lengthAdjust="spacingAndGlyphs">=</tspan><tspan x="1255.90" textLength="7.2" lengthAdjust="spacingAndGlyphs">-</tspan><tspan x="1264.75">1</tspan><tspan x="1273.75">2</tspan><tspan x="1282.75">3</tspan><tspan x="1293.62">.</tspan><tspan x="1300.75">5</tspan><tspan x="1309.75">2</tspan><tspan x="1327.33">d</tspan><tspan x="1336.30" textLength="8.4" lengthAdjust="spacingAndGlyphs">B</tspan><tspan x="1345.30" textLength="8.4" lengthAdjust="spacingAndGlyphs">F</tspan><tspan x="1354.33">S</tspan></text></svg>
<svg style="position:absolute;left:0;top:0" width="1659" height="863" shape-rendering="crispEdges"><path d="M141.5 166V782M193.5 166V782M234.5 166V782M268.5 166V782M296.5 166V782M320.5 166V782M342.5 166V782M361.5 166V782M488.5 166V782M562.5 166V782M615.5 166V782M656.5 166V782M689.5 166V782M717.5 166V782M742.5 166V782M763.5 166V782M783.5 166V782M910.5 166V782M984.5 166V782M1036.5 166V782M1077.5 166V782M1111.5 166V782M1139.5 166V782M1163.5 166V782M1185.5 166V782M1204.5 166V782M1331.5 166V782M67 227.5H1364M67 289.5H1364M67 350.5H1364M67 412.5H1364M67 474.5H1364M67 535.5H1364M67 597.5H1364M67 658.5H1364M67 720.5H1364" stroke="#5e5e5e" stroke-width="1" stroke-dasharray="3 3" fill="none"/><path d="M67 547.5H1331" stroke="#ffff00" stroke-width="1" stroke-dasharray="3 3" fill="none"/><path d="M67.5 166.5H1364.5V782.5H67.5Z" stroke="#5e5e5e" stroke-width="1" fill="none"/><path d="M68.5 674V686M69.5 664V681M70.5 667V685M71.5 667V686M72.5 669V685M73.5 673V676M74.5 672V688M75.5 667V683M76.5 672V689M77.5 671V683M78.5 675V683M79.5 666V677M80.5 670V684M81.5 668V684M82.5 670V698M83.5 673V693M84.5 670V685M85.5 669V677M86.5 669V685M87.5 670V684M88.5 668V694M89.5 671V685M90.5 671V685M91.5 666V685M92.5 672V683M93.5 664V694M94.5 664V684M95.5 670V686M96.5 666V693M97.5 675V689M98.5 673V704M99.5 673V690M100.5 673V684M101.5 667V686M102.5 667V679M103.5 673V682M104.5 668V686M105.5 666V680M106.5 668V695M107.5 671V686M108.5 671V691M109.5 670V680M110.5 669V686M111.5 667V680M112.5 667V695M113.5 670V685M114.5 671V681M115.5 675V686M116.5 677V695M117.5 674V695M118.5 666V688M119.5 662V687M120.5 672V687M121.5 672V686M122.5 670V685M123.5 669V681M124.5 669V692M125.5 672V689M126.5 674V697M127.5 671V697M128.5 669V691M129.5 673V687M130.5 665V700M131.5 669V683M132.5 674V691M133.5 670V685M134.5 672V680M135.5 674V684M136.5 669V690M137.5 677V682M138.5 672V687M139.5 670V684M140.5 675V687M141.5 667V695M142.5 668V690M143.5 673V684M144.5 670V685M145.5 677V686M146.5 672V688M147.5 670V689M148.5 671V689M149.5 673V702M150.5 673V684M151.5 672V702M152.5 672V692M153.5 676V687M154.5 671V698M155.5 663V681M156.5 673V687M157.5 671V690M158.5 670V698M159.5 673V685M160.5 665V685M161.5 670V689M162.5 674V691M163.5 675V687M164.5 671V687M165.5 669V693M166.5 672V690M167.5 666V688M168.5 666V693M169.5 677V703M170.5 671V688M171.5 671V691M172.5 671V688M173.5 671V699M174.5 672V694M175.5 672V683M176.5 676V704M177.5 673V704M178.5 666V691M179.5 671V687M180.5 671V700M181.5 674V688M182.5 670V702M183.5 672V688M184.5 672V687M185.5 672V692M186.5 672V695M187.5 671V691M188.5 676V700M189.5 675V694M190.5 674V698M191.5 672V690M192.5 672V698M193.5 669V686M194.5 672V693M195.5 676V687M196.5 676V695M197.5 676V695M198.5 678V692M199.5 673V694M200.5 674V692M201.5 676V688M202.5 675V691M203.5 677V700M204.5 674V694M205.5 674V697M206.5 676V695M207.5 676V691M208.5 675V688M209.5 676V699M210.5 674V691M211.5 679V691M212.5 677V696M213.5 672V700M214.5 671V694M215.5 673V696M216.5 679V691M217.5 675V697M218.5 677V697M219.5 676V694M220.5 675V694M221.5 670V693M222.5 670V700M223.5 672V691M224.5 679V699M225.5 674V700M226.5 676V698M227.5 675V698M228.5 673V691M229.5 673V697M230.5 677V700M231.5 677V710M232.5 673V700M233.5 677V696M234.5 677V695M235.5 671V695M236.5 674V696M237.5 672V693M238.5 677V692M239.5 677V691M240.5 675V689M241.5 678V696M242.5 676V696M243.5 675V695M244.5 679V696M245.5 680V694M246.5 677V692M247.5 677V695M248.5 680V700M249.5 675V698M250.5 673V691M251.5 678V705M252.5 674V694M253.5 675V709M254.5 680V709M255.5 675V689M256.5 677V700M257.5 682V702M258.5 676V703M259.5 671V691M260.5 681V704M261.5 677V699M262.5 672V693M263.5 679V692M264.5 677V694M265.5 679V695M266.5 673V700M267.5 675V703M268.5 675V698M269.5 675V703M270.5 673V696M271.5 675V703M272.5 677V696M273.5 671V694M274.5 673V697M275.5 679V707M276.5 679V702M277.5 677V694M278.5 679V697M279.5 680V696M280.5 680V700M281.5 678V705M282.5 679V701M283.5 676V696M284.5 676V700M285.5 675V700M286.5 674V712M287.5 681V695M288.5 675V699M289.5 680V701M290.5 678V701M291.5 681V701M292.5 679V709M293.5 680V701M294.5 679V704M295.5 675V699M296.5 675V692M297.5 671V701M298.5 678V709M299.5 682V703M300.5 684V704M301.5 674V704M302.5 680V706M303.5 678V704M304.5 673V699M305.5 680V702M306.5 681V706M307.5 681V698M308.5 679V701M309.5 678V704M310.5 678V712M311.5 680V705M312.5 680V699M313.5 677V695M314.5 680V705M315.5 678V698M316.5 675V705M317.5 680V703M318.5 674V703M319.5 678V716M320.5 681V700M321.5 678V700M322.5 682V701M323.5 676V707M324.5 679V707M325.5 680V702M326.5 680V704M327.5 678V704M328.5 679V695M329.5 683V703M330.5 684V704M331.5 679V704M332.5 679V708M333.5 681V698M334.5 681V708M335.5 681V708M336.5 681V697M337.5 680V707M338.5 679V717M339.5 683V704M340.5 678V707M341.5 678V699M342.5 683V704M343.5 681V712M344.5 680V700M345.5 678V709M346.5 683V705M347.5 682V701M348.5 684V703M349.5 678V702M350.5 681V717M351.5 681V700M352.5 681V707M353.5 679V706M354.5 679V700M355.5 681V710M356.5 681V712M357.5 683V708M358.5 681V705M359.5 683V707M360.5 686V709M361.5 680V709M362.5 683V705M363.5 682V705M364.5 682V704M365.5 682V707M366.5 684V705M367.5 682V704M368.5 681V704M369.5 681V720M370.5 674V706M371.5 683V714M372.5 686V711M373.5 682V705M374.5 681V703M375.5 681V715M376.5 680V715M377.5 684V704M378.5 680V706M379.5 681V711M380.5 684V709M381.5 682V705M382.5 682V706M383.5 684V712M384.5 684V707M385.5 682V715M386.5 683V712M387.5 685V706M388.5 679V717M389.5 685V717M390.5 682V710M391.5 680V707M392.5 680V703M393.5 684V714M394.5 683V720M395.5 682V711M396.5 682V711M397.5 683V712M398.5 679V707M399.5 684V704M400.5 684V708M401.5 681V712M402.5 681V704M403.5 683V711M404.5 681V709M405.5 685V712M406.5 682V710M407.5 680V705M408.5 685V711M409.5 685V703M410.5 682V710M411.5 682V710M412.5 686V708M413.5 686V709M414.5 680V712M415.5 681V713M416.5 687V704M417.5 685V711M418.5 683V712M419.5 688V710M420.5 684V708M421.5 682V708M422.5 686V715M423.5 687V708M424.5 678V703M425.5 681V707M426.5 684V711M427.5 686V713M428.5 682V710M429.5 680V720M430.5 683V711M431.5 681V705M432.5 679V703M433.5 682V711M434.5 682V715M435.5 683V706M436.5 686V704M437.5 682V703M438.5 681V710M439.5 683V708M440.5 683V705M441.5 679V707M442.5 681V711M443.5 683V705M444.5 685V712M445.5 681V710M446.5 683V699M447.5 683V713M448.5 682V707M449.5 686V714M450.5 685V708M451.5 687V708M452.5 686V708M453.5 683V717M454.5 688V709M455.5 684V711M456.5 684V717M457.5 687V712M458.5 682V709M459.5 686V714M460.5 686V716M461.5 687V708M462.5 684V718M463.5 685V711M464.5 684V716M465.5 679V709M466.5 684V715M467.5 682V711M468.5 685V713M469.5 684V718M470.5 683V714M471.5 685V720M472.5 682V705M473.5 684V712M474.5 685V705M475.5 687V711M476.5 679V708M477.5 687V710M478.5 683V713M479.5 683V715M480.5 684V708M481.5 686V706M482.5 682V713M483.5 685V718M484.5 683V722M485.5 685V707M486.5 685V717M487.5 683V707M488.5 683V706M489.5 685V715M490.5 688V713M491.5 684V708M492.5 686V719M493.5 683V717M494.5 684V713M495.5 686V711M496.5 683V708M497.5 683V714M498.5 683V714M499.5 685V711M500.5 683V714M501.5 685V705M502.5 686V714M503.5 683V710M504.5 687V716M505.5 686V711M506.5 681V720M507.5 686V710M508.5 685V720M509.5 684V715M510.5 685V711M511.5 683V716M512.5 683V707M513.5 682V709M514.5 685V715M515.5 684V710M516.5 687V719M517.5 683V709M518.5 683V708M519.5 686V718M520.5 682V718M521.5 685V712M522.5 686V715M523.5 681V714M524.5 685V713M525.5 682V715M526.5 682V710M527.5 682V710M528.5 687V718M529.5 683V712M530.5 681V714M531.5 684V717M532.5 683V719M533.5 684V710M534.5 685V718M535.5 679V713M536.5 684V716M537.5 684V714M538.5 683V719M539.5 677V712M540.5 682V715M541.5 685V712M542.5 684V726M543.5 684V709M544.5 683V712M545.5 688V709M546.5 686V710M547.5 687V716M548.5 684V711M549.5 684V712M550.5 686V715M551.5 684V717M552.5 687V716M553.5 684V718M554.5 687V718M555.5 685V713M556.5 684V709M557.5 684V712M558.5 684V715M559.5 684V717M560.5 686V717M561.5 686V712M562.5 683V723M563.5 685V719M564.5 683V714M565.5 682V718M566.5 689V712M567.5 684V713M568.5 685V717M569.5 685V715M570.5 686V712M571.5 680V713M572.5 685V717M573.5 685V715M574.5 685V714M575.5 686V724M576.5 681V713M577.5 682V711M578.5 684V710M579.5 683V714M580.5 683V715M581.5 686V713M582.5 683V716M583.5 687V712M584.5 683V713M585.5 684V711M586.5 682V723M587.5 686V711M588.5 680V715M589.5 686V716M590.5 686V723M591.5 685V717M592.5 688V712M593.5 682V712M594.5 688V715M595.5 684V720M596.5 686V713M597.5 683V712M598.5 686V714M599.5 687V716M600.5 687V712M601.5 684V715M602.5 683V715M603.5 686V715M604.5 686V716M605.5 684V711M606.5 685V715M607.5 684V717M608.5 687V720M609.5 684V713M610.5 689V713M611.5 686V715M612.5 685V715M613.5 685V715M614.5 685V715M615.5 685V713M616.5 683V715M617.5 687V721M618.5 685V718M619.5 687V716M620.5 679V717M621.5 685V716M622.5 686V718M623.5 688V716M624.5 684V712M625.5 682V718M626.5 686V715M627.5 685V710M628.5 684V710M629.5 684V721M630.5 683V716M631.5 686V713M632.5 681V716M633.5 684V717M634.5 686V717M635.5 684V719M636.5 684V720M637.5 684V714M638.5 684V713M639.5 682V720M640.5 685V723M641.5 685V713M642.5 686V711M643.5 685V716M644.5 685V716M645.5 687V715M646.5 686V726M647.5 685V714M648.5 688V715M649.5 687V719M650.5 686V724M651.5 687V723M652.5 687V719M653.5 689V714M654.5 686V722M655.5 682V716M656.5 685V716M657.5 685V716M658.5 683V713M659.5 686V721M660.5 682V720M661.5 687V715M662.5 684V714M663.5 686V711M664.5 683V723M665.5 685V724M666.5 682V719M667.5 686V720M668.5 688V720M669.5 686V719M670.5 683V714M671.5 685V717M672.5 686V721M673.5 686V719M674.5 684V714M675.5 688V714M676.5 681V723M677.5 686V719M678.5 686V720M679.5 685V716M680.5 687V719M681.5 686V722M682.5 682V718M683.5 685V717M684.5 686V713M685.5 685V720M686.5 686V717M687.5 687V716M688.5 687V722M689.5 684V715M690.5 686V722M691.5 686V718M692.5 683V717M693.5 687V726M694.5 686V719M695.5 684V718M696.5 686V720M697.5 683V716M698.5 688V720M699.5 684V718M700.5 688V718M701.5 683V720M702.5 687V723M703.5 686V718M704.5 685V714M705.5 686V720M706.5 685V716M707.5 684V716M708.5 687V718M709.5 686V730M710.5 686V718M711.5 685V722M712.5 686V721M713.5 687V716M714.5 686V727M715.5 685V720M716.5 684V718M717.5 685V718M718.5 684V725M719.5 688V719M720.5 684V717M721.5 683V724M722.5 686V722M723.5 685V721M724.5 685V717M725.5 686V723M726.5 686V713M727.5 685V722M728.5 685V719M729.5 688V719M730.5 687V725M731.5 687V718M732.5 688V720M733.5 684V723M734.5 685V720M735.5 688V718M736.5 685V723M737.5 688V719M738.5 687V724M739.5 688V718M740.5 682V723M741.5 684V725M742.5 680V721M743.5 686V714M744.5 684V727M745.5 686V719M746.5 688V721M747.5 687V726M748.5 688V716M749.5 688V720M750.5 686V723M751.5 687V723M752.5 686V719M753.5 685V719M754.5 687V724M755.5 687V720M756.5 688V725M757.5 689V720M758.5 684V727M759.5 686V720M760.5 685V725M761.5 687V724M762.5 685V718M763.5 685V721M764.5 688V721M765.5 687V723M766.5 685V725M767.5 686V725M768.5 685V719M769.5 687V720M770.5 687V719M771.5 687V721M772.5 687V720M773.5 684V721M774.5 685V720M775.5 683V722M776.5 681V724M777.5 678V720M778.5 674V715M779.5 668V710M780.5 660V703M781.5 650V697M782.5 634V690M783.5 188V660M784.5 552V690M785.5 645V697M786.5 660V703M787.5 668V710M788.5 673V715M789.5 677V720M790.5 680V718M791.5 683V719M792.5 685V724M793.5 686V722M794.5 687V723M795.5 684V722M796.5 687V723M797.5 686V724M798.5 687V722M799.5 688V718M800.5 686V720M801.5 687V725M802.5 689V719M803.5 688V720M804.5 686V721M805.5 685V727M806.5 688V719M807.5 689V723M808.5 690V720M809.5 685V728M810.5 688V725M811.5 687V724M812.5 685V725M813.5 689V723M814.5 689V723M815.5 683V718M816.5 688V724M817.5 686V725M818.5 687V729M819.5 684V718M820.5 686V733M821.5 687V717M822.5 686V733M823.5 688V723M824.5 688V725M825.5 690V730M826.5 688V721M827.5 690V726M828.5 687V720M829.5 690V724M830.5 686V724M831.5 690V729M832.5 687V735M833.5 685V735M834.5 688V724M835.5 684V726M836.5 688V722M837.5 688V721M838.5 687V726M839.5 687V722M840.5 687V725M841.5 688V723M842.5 682V723M843.5 689V725M844.5 688V718M845.5 688V720M846.5 688V723M847.5 688V726M848.5 688V722M849.5 689V723M850.5 690V725M851.5 688V725M852.5 689V728M853.5 686V726M854.5 691V723M855.5 686V724M856.5 688V723M857.5 690V729M858.5 690V724M859.5 689V731M860.5 688V728M861.5 688V723M862.5 690V727M863.5 689V723M864.5 690V728M865.5 688V728M866.5 689V727M867.5 689V724M868.5 687V734M869.5 692V725M870.5 689V726M871.5 690V730M872.5 690V724M873.5 687V723M874.5 689V722M875.5 689V720M876.5 690V734M877.5 688V734M878.5 690V725M879.5 692V732M880.5 690V728M881.5 690V724M882.5 691V729M883.5 688V725M884.5 687V722M885.5 690V728M886.5 690V723M887.5 689V734M888.5 690V724M889.5 690V724M890.5 690V728M891.5 688V727M892.5 688V739M893.5 690V729M894.5 690V725M895.5 689V729M896.5 688V734M897.5 686V728M898.5 687V724M899.5 689V724M900.5 690V727M901.5 692V728M902.5 691V726M903.5 688V725M904.5 689V724M905.5 689V724M906.5 687V730M907.5 688V735M908.5 690V735M909.5 691V722M910.5 688V737M911.5 691V732M912.5 689V726M913.5 691V730M914.5 687V726M915.5 691V728M916.5 689V729M917.5 690V730M918.5 689V733M919.5 688V723M920.5 687V727M921.5 691V724M922.5 689V731M923.5 689V730M924.5 689V724M925.5 689V733M926.5 688V728M927.5 684V730M928.5 687V731M929.5 686V727M930.5 687V731M931.5 690V727M932.5 690V731M933.5 687V733M934.5 689V751M935.5 688V731M936.5 689V726M937.5 689V728M938.5 689V724M939.5 689V729M940.5 686V727M941.5 691V728M942.5 689V732M943.5 688V735M944.5 687V732M945.5 689V728M946.5 688V733M947.5 689V730M948.5 689V725M949.5 687V731M950.5 690V724M951.5 690V732M952.5 688V731M953.5 687V731M954.5 688V725M955.5 690V732M956.5 689V731M957.5 686V725M958.5 689V729M959.5 690V728M960.5 691V726M961.5 688V727M962.5 690V728M963.5 689V730M964.5 688V730M965.5 691V725M966.5 688V730M967.5 690V732M968.5 688V727M969.5 690V729M970.5 688V728M971.5 690V723M972.5 688V730M973.5 691V726M974.5 688V730M975.5 689V729M976.5 689V725M977.5 690V730M978.5 689V730M979.5 689V727M980.5 688V725M981.5 691V726M982.5 690V729M983.5 690V734M984.5 690V729M985.5 689V728M986.5 689V729M987.5 688V727M988.5 687V744M989.5 688V744M990.5 689V732M991.5 689V734M992.5 691V723M993.5 689V734M994.5 689V726M995.5 690V734M996.5 689V729M997.5 689V725M998.5 692V731M999.5 690V728M1000.5 688V736M1001.5 687V728M1002.5 689V726M1003.5 687V726M1004.5 690V729M1005.5 690V738M1006.5 688V732M1007.5 689V723M1008.5 689V729M1009.5 689V727M1010.5 690V724M1011.5 689V730M1012.5 690V728M1013.5 687V735M1014.5 690V731M1015.5 689V729M1016.5 689V733M1017.5 688V740M1018.5 688V733M1019.5 687V734M1020.5 690V728M1021.5 687V725M1022.5 691V728M1023.5 688V727M1024.5 688V735M1025.5 689V733M1026.5 688V745M1027.5 688V727M1028.5 690V737M1029.5 688V736M1030.5 690V733M1031.5 688V734M1032.5 687V729M1033.5 686V728M1034.5 689V730M1035.5 689V731M1036.5 689V734M1037.5 686V726M1038.5 690V729M1039.5 690V725M1040.5 689V731M1041.5 687V727M1042.5 691V733M1043.5 689V733M1044.5 689V734M1045.5 690V737M1046.5 689V730M1047.5 687V741M1048.5 688V733M1049.5 688V730M1050.5 688V728M1051.5 690V727M1052.5 689V734M1053.5 689V736M1054.5 684V735M1055.5 690V731M1056.5 689V732M1057.5 690V727M1058.5 689V729M1059.5 689V734M1060.5 690V734M1061.5 689V732M1062.5 687V724M1063.5 689V740M1064.5 687V732M1065.5 690V730M1066.5 690V732M1067.5 687V726M1068.5 686V725M1069.5 691V732M1070.5 688V726M1071.5 689V737M1072.5 689V729M1073.5 689V729M1074.5 689V733M1075.5 690V732M1076.5 689V732M1077.5 689V734M1078.5 691V736M1079.5 689V733M1080.5 689V725M1081.5 691V727M1082.5 690V736M1083.5 690V730M1084.5 692V729M1085.5 689V729M1086.5 689V730M1087.5 690V732M1088.5 689V735M1089.5 688V728M1090.5 688V730M1091.5 688V731M1092.5 689V733M1093.5 690V728M1094.5 689V735M1095.5 690V733M1096.5 688V732M1097.5 687V730M1098.5 688V732M1099.5 691V728M1100.5 689V731M1101.5 687V730M1102.5 689V728M1103.5 689V734M1104.5 688V734M1105.5 690V735M1106.5 687V733M1107.5 689V730M1108.5 690V741M1109.5 687V733M1110.5 687V729M1111.5 686V731M1112.5 690V732M1113.5 690V728M1114.5 686V731M1115.5 689V729M1116.5 685V732M1117.5 689V727M1118.5 685V737M1119.5 685V729M1120.5 691V736M1121.5 688V737M1122.5 687V734M1123.5 690V734M1124.5 690V728M1125.5 690V727M1126.5 689V730M1127.5 690V728M1128.5 690V730M1129.5 688V732M1130.5 689V737M1131.5 688V729M1132.5 688V737M1133.5 690V732M1134.5 689V728M1135.5 687V729M1136.5 691V733M1137.5 688V729M1138.5 688V737M1139.5 688V732M1140.5 689V735M1141.5 691V733M1142.5 692V733M1143.5 690V737M1144.5 689V733M1145.5 688V735M1146.5 690V734M1147.5 689V740M1148.5 690V745M1149.5 688V733M1150.5 690V734M1151.5 689V732M1152.5 690V728M1153.5 691V733M1154.5 689V731M1155.5 688V736M1156.5 690V730M1157.5 688V733M1158.5 689V731M1159.5 690V738M1160.5 689V741M1161.5 688V733M1162.5 689V733M1163.5 688V735M1164.5 688V735M1165.5 689V733M1166.5 690V735M1167.5 687V739M1168.5 691V741M1169.5 688V742M1170.5 691V742M1171.5 683V733M1172.5 689V738M1173.5 689V730M1174.5 689V737M1175.5 688V736M1176.5 687V732M1177.5 690V732M1178.5 688V735M1179.5 688V741M1180.5 688V731M1181.5 688V734M1182.5 690V730M1183.5 690V744M1184.5 690V738M1185.5 691V743M1186.5 689V733M1187.5 690V733M1188.5 690V731M1189.5 691V731M1190.5 689V731M1191.5 689V734M1192.5 691V740M1193.5 688V732M1194.5 688V738M1195.5 689V733M1196.5 689V735M1197.5 688V734M1198.5 692V731M1199.5 687V736M1200.5 688V734M1201.5 688V733M1202.5 689V735M1203.5 690V738M1204.5 688V734M1205.5 688V731M1206.5 690V733M1207.5 689V737M1208.5 689V744M1209.5 691V731M1210.5 691V733M1211.5 690V737M1212.5 689V745M1213.5 685V729M1214.5 688V732M1215.5 690V736M1216.5 689V733M1217.5 690V733M1218.5 687V737M1219.5 689V731M1220.5 687V731M1221.5 690V735M1222.5 688V739M1223.5 691V731M1224.5 687V733M1225.5 690V738M1226.5 688V731M1227.5 689V736M1228.5 688V736M1229.5 690V739M1230.5 689V732M1231.5 688V735M1232.5 690V734M1233.5 690V729M1234.5 688V736M1235.5 690V734M1236.5 691V733M1237.5 689V736M1238.5 688V733M1239.5 689V735M1240.5 690V733M1241.5 688V740M1242.5 687V741M1243.5 690V736M1244.5 688V737M1245.5 687V734M1246.5 690V734M1247.5 688V734M1248.5 690V733M1249.5 690V736M1250.5 687V739M1251.5 689V740M1252.5 690V737M1253.5 688V736M1254.5 689V736M1255.5 689V737M1256.5 690V732M1257.5 689V733M1258.5 689V736M1259.5 688V734M1260.5 689V740M1261.5 688V737M1262.5 689V743M1263.5 688V739M1264.5 686V729M1265.5 688V738M1266.5 690V735M1267.5 688V738M1268.5 689V736M1269.5 691V734M1270.5 688V740M1271.5 689V734M1272.5 689V743M1273.5 689V736M1274.5 690V739M1275.5 690V734M1276.5 689V733M1277.5 690V735M1278.5 690V736M1279.5 688V736M1280.5 689V734M1281.5 685V731M1282.5 686V733M1283.5 689V737M1284.5 689V746M1285.5 691V737M1286.5 689V732M1287.5 687V740M1288.5 686V738M1289.5 689V749M1290.5 689V737M1291.5 690V739M1292.5 690V750M1293.5 689V735M1294.5 686V736M1295.5 688V735M1296.5 687V733M1297.5 689V737M1298.5 689V738M1299.5 689V737M1300.5 689V734M1301.5 689V735M1302.5 690V744M1303.5 688V733M1304.5 690V739M1305.5 690V733M1306.5 687V734M1307.5 688V738M1308.5 688V737M1309.5 688V733M1310.5 688V733M1311.5 691V738M1312.5 689V732M1313.5 689V736M1314.5 688V737M1315.5 688V735M1316.5 690V741M1317.5 691V735M1318.5 688V734M1319.5 687V736M1320.5 689V742M1321.5 687V737M1322.5 688V734M1323.5 688V735M1324.5 689V737M1325.5 689V733M1326.5 689V736M1327.5 690V740M1328.5 689V737M1329.5 690V737M1330.5 690V735M1331.5 690V732M1332.5 689V740M1333.5 689V734M1334.5 690V734M1335.5 689V741M1336.5 690V739M1337.5 690V740M1338.5 689V738M1339.5 689V734M1340.5 690V737M1341.5 690V739M1342.5 690V735M1343.5 687V739M1344.5 691V735M1345.5 688V739M1346.5 689V738M1347.5 690V745M1348.5 687V739M1349.5 690V735M1350.5 689V736M1351.5 692V746M1352.5 691V737M1353.5 691V740M1354.5 692V737M1355.5 693V736M1356.5 692V733M1357.5 695V740M1358.5 695V736M1359.5 696V736M1360.5 697V736M1361.5 698V735M1362.5 698V737M1363.5 699V737" stroke="#ffff00" stroke-width="1" fill="none"/><path d="M234.5 611V690M435.5 644V690M529.5 647V690M590.5 663V690M637.5 673V690M672.5 667V690M704.5 677V690M742.5 679V690M763.5 665V690M800.5 670V690M816.5 681V690M910.5 579V690M984.5 561V690M1036.5 605V690M1077.5 567V690M1111.5 612V690M1139.5 604V690M1163.5 662V690M1185.5 632V690M1204.5 653V690M1222.5 650V690M1238.5 656V690M1252.5 673V690M1266.5 677V690M1278.5 657V690M1290.5 669V690M1295.5 676V690M1301.5 644V690M1304.5 679V690M1322.5 663V690M1326.5 668V690M1340.5 652V690M1346.5 670V690M1349.5 652V690M1353.5 662V690M1359.5 673V690" stroke="#ffff00" stroke-width="1" fill="none"/></svg>
<svg style="position:absolute;left:1344px;top:169px;overflow:visible" width="20" height="13" viewBox="0 0 20 13"><g fill="#ffff00"><rect x="1" y="1" width="5" height="1"/><rect x="9" y="1" width="5" height="1"/><rect x="16" y="1" width="3" height="1"/><rect x="1" y="3" width="6" height="1"/><rect x="9" y="3" width="5" height="1"/><rect x="16" y="3" width="3" height="1"/><rect x="1" y="5" width="6" height="1"/><rect x="8" y="5" width="6" height="1"/><rect x="16" y="5" width="3" height="1"/><rect x="1" y="7" width="3" height="5"/><path d="M5 7 H10 L9 12 H6 Z"/><rect x="11" y="7" width="3" height="5"/><rect x="16" y="7" width="3" height="5"/></g></svg>
<svg style="position:absolute;left:0;top:0;overflow:visible" width="1" height="1"><text y="172" font-family="Liberation Serif" font-size="15" font-weight="bold" fill="#ffff00" transform="translate(0 172) scale(1 1.08) translate(0 -172)"><tspan x="55.75">0</tspan></text></svg>
<svg style="position:absolute;left:0;top:0;overflow:visible" width="1" height="1"><text y="233" font-family="Liberation Serif" font-size="15" font-weight="bold" fill="#ffff00" transform="translate(0 233) scale(1 1.08) translate(0 -233)"><tspan x="37.90" textLength="7.2" lengthAdjust="spacingAndGlyphs">-</tspan><tspan x="46.75">2</tspan><tspan x="55.75">0</tspan></text></svg>
<svg style="position:absolute;left:0;top:0;overflow:visible" width="1" height="1"><text y="295" font-family="Liberation Serif" font-size="15" font-weight="bold" fill="#ffff00" transform="translate(0 295) scale(1 1.08) translate(0 -295)"><tspan x="37.90" textLength="7.2" lengthAdjust="spacingAndGlyphs">-</tspan><tspan x="46.75">4</tspan><tspan x="55.75">0</tspan></text></svg>
<svg style="position:absolute;left:0;top:0;overflow:visible" width="1" height="1"><text y="356" font-family="Liberation Serif" font-size="15" font-weight="bold" fill="#ffff00" transform="translate(0 356) scale(1 1.08) translate(0 -356)"><tspan x="37.90" textLength="7.2" lengthAdjust="spacingAndGlyphs">-</tspan><tspan x="46.75">6</tspan><tspan x="55.75">0</tspan></text></svg>
<svg style="position:absolute;left:0;top:0;overflow:visible" width="1" height="1"><text y="418" font-family="Liberation Serif" font-size="15" font-weight="bold" fill="#ffff00" transform="translate(0 418) scale(1 1.08) translate(0 -418)"><tspan x="37.90" textLength="7.2" lengthAdjust="spacingAndGlyphs">-</tspan><tspan x="46.75">8</tspan><tspan x="55.75">0</tspan></text></svg>
<svg style="position:absolute;left:0;top:0;overflow:visible" width="1" height="1"><text y="480" font-family="Liberation Serif" font-size="15" font-weight="bold" fill="#ffff00" transform="translate(0 480) scale(1 1.08) translate(0 -480)"><tspan x="28.90" textLength="7.2" lengthAdjust="spacingAndGlyphs">-</tspan><tspan x="37.75">1</tspan><tspan x="46.75">0</tspan><tspan x="55.75">0</tspan></text></svg>
<svg style="position:absolute;left:0;top:0;overflow:visible" width="1" height="1"><text y="541" font-family="Liberation Serif" font-size="15" font-weight="bold" fill="#ffff00" transform="translate(0 541) scale(1 1.08) translate(0 -541)"><tspan x="28.90" textLength="7.2" lengthAdjust="spacingAndGlyphs">-</tspan><tspan x="37.75">1</tspan><tspan x="46.75">2</tspan><tspan x="55.75">0</tspan></text></svg>
<svg style="position:absolute;left:0;top:0;overflow:visible" width="1" height="1"><text y="603" font-family="Liberation Serif" font-size="15" font-weight="bold" fill="#ffff00" transform="translate(0 603) scale(1 1.08) translate(0 -603)"><tspan x="28.90" textLength="7.2" lengthAdjust="spacingAndGlyphs">-</tspan><tspan x="37.75">1</tspan><tspan x="46.75">4</tspan><tspan x="55.75">0</tspan></text></svg>
<svg style="position:absolute;left:0;top:0;overflow:visible" width="1" height="1"><text y="664" font-family="Liberation Serif" font-size="15" font-weight="bold" fill="#ffff00" transform="translate(0 664) scale(1 1.08) translate(0 -664)"><tspan x="28.90" textLength="7.2" lengthAdjust="spacingAndGlyphs">-</tspan><tspan x="37.75">1</tspan><tspan x="46.75">6</tspan><tspan x="55.75">0</tspan></text></svg>
<svg style="position:absolute;left:0;top:0;overflow:visible" width="1" height="1"><text y="726" font-family="Liberation Serif" font-size="15" font-weight="bold" fill="#ffff00" transform="translate(0 726) scale(1 1.08) translate(0 -726)"><tspan x="28.90" textLength="7.2" lengthAdjust="spacingAndGlyphs">-</tspan><tspan x="37.75">1</tspan><tspan x="46.75">8</tspan><tspan x="55.75">0</tspan></text></svg>
<svg style="position:absolute;left:0;top:0;overflow:visible" width="1" height="1"><text y="788" font-family="Liberation Serif" font-size="15" font-weight="bold" fill="#ffff00" transform="translate(0 788) scale(1 1.08) translate(0 -788)"><tspan x="28.90" textLength="7.2" lengthAdjust="spacingAndGlyphs">-</tspan><tspan x="37.75">2</tspan><tspan x="46.75">0</tspan><tspan x="55.75">0</tspan></text></svg>
<svg style="position:absolute;left:0;top:0;overflow:visible" width="1" height="1"><text y="800" font-family="Liberation Serif" font-size="15" font-weight="bold" fill="#ffffff" transform="translate(0 800) scale(1 1.08) translate(0 -800)"><tspan x="58.25">2</tspan><tspan x="67.25">0</tspan></text></svg>
<svg style="position:absolute;left:0;top:0;overflow:visible" width="1" height="1"><text y="800" font-family="Liberation Serif" font-size="15" font-weight="bold" fill="#ffffff" transform="translate(0 800) scale(1 1.08) translate(0 -800)"><tspan x="225.95">5</tspan><tspan x="234.95">0</tspan></text></svg>
<svg style="position:absolute;left:0;top:0;overflow:visible" width="1" height="1"><text y="800" font-family="Liberation Serif" font-size="15" font-weight="bold" fill="#ffffff" transform="translate(0 800) scale(1 1.08) translate(0 -800)"><tspan x="348.45">1</tspan><tspan x="357.45">0</tspan><tspan x="366.45">0</tspan></text></svg>
<svg style="position:absolute;left:0;top:0;overflow:visible" width="1" height="1"><text y="800" font-family="Liberation Serif" font-size="15" font-weight="bold" fill="#ffffff" transform="translate(0 800) scale(1 1.08) translate(0 -800)"><tspan x="475.45">2</tspan><tspan x="484.45">0</tspan><tspan x="493.45">0</tspan></text></svg>
<svg style="position:absolute;left:0;top:0;overflow:visible" width="1" height="1"><text y="800" font-family="Liberation Serif" font-size="15" font-weight="bold" fill="#ffffff" transform="translate(0 800) scale(1 1.08) translate(0 -800)"><tspan x="643.45">5</tspan><tspan x="652.45">0</tspan><tspan x="661.45">0</tspan></text></svg>
<svg style="position:absolute;left:0;top:0;overflow:visible" width="1" height="1"><text y="800" font-family="Liberation Serif" font-size="15" font-weight="bold" fill="#ffffff" transform="translate(0 800) scale(1 1.08) translate(0 -800)"><tspan x="774.95">1</tspan><tspan x="783.53">k</tspan></text></svg>
<svg style="position:absolute;left:0;top:0;overflow:visible" width="1" height="1"><text y="800" font-family="Liberation Serif" font-size="15" font-weight="bold" fill="#ffffff" transform="translate(0 800) scale(1 1.08) translate(0 -800)"><tspan x="901.95">2</tspan><tspan x="910.53">k</tspan></text></svg>
<svg style="position:absolute;left:0;top:0;overflow:visible" width="1" height="1"><text y="800" font-family="Liberation Serif" font-size="15" font-weight="bold" fill="#ffffff" transform="translate(0 800) scale(1 1.08) translate(0 -800)"><tspan x="1068.95">5</tspan><tspan x="1077.53">k</tspan></text></svg>
<svg style="position:absolute;left:0;top:0;overflow:visible" width="1" height="1"><text y="800" font-family="Liberation Serif" font-size="15" font-weight="bold" fill="#ffffff" transform="translate(0 800) scale(1 1.08) translate(0 -800)"><tspan x="1191.45">1</tspan><tspan x="1200.45">0</tspan><tspan x="1209.03">k</tspan></text></svg>
<svg style="position:absolute;left:0;top:0;overflow:visible" width="1" height="1"><text y="800" font-family="Liberation Serif" font-size="15" font-weight="bold" fill="#ffffff" transform="translate(0 800) scale(1 1.08) translate(0 -800)"><tspan x="1318.45">2</tspan><tspan x="1327.45">0</tspan><tspan x="1336.03">k</tspan></text></svg>
<svg style="position:absolute;left:0;top:0;overflow:visible" width="1" height="1"><text y="812" font-family="Liberation Serif" font-size="15" font-weight="bold" fill="#ffffff" transform="translate(0 812) scale(1 1.08) translate(0 -812)"><tspan x="1371.30" textLength="8.4" lengthAdjust="spacingAndGlyphs">H</tspan><tspan x="1380.90" textLength="7.2" lengthAdjust="spacingAndGlyphs">z</tspan></text></svg>
<svg style="position:absolute;left:0;top:0;overflow:visible" width="1" height="1"><text y="814" font-family="Liberation Serif" font-size="15" font-weight="bold" fill="#ffffff" transform="translate(0 814) scale(1 1.08) translate(0 -814)"><tspan x="13.30" textLength="8.4" lengthAdjust="spacingAndGlyphs">F</tspan><tspan x="22.30" textLength="8.4" lengthAdjust="spacingAndGlyphs">F</tspan><tspan x="31.30" textLength="8.4" lengthAdjust="spacingAndGlyphs">T</tspan><tspan x="49.33">S</tspan><tspan x="58.90" textLength="7.2" lengthAdjust="spacingAndGlyphs">e</tspan><tspan x="67.75">g</tspan><tspan x="76.30" textLength="8.4" lengthAdjust="spacingAndGlyphs">m</tspan><tspan x="85.90" textLength="7.2" lengthAdjust="spacingAndGlyphs">e</tspan><tspan x="94.33">n</tspan><tspan x="105.00">t</tspan><tspan x="112.90" textLength="7.2" lengthAdjust="spacingAndGlyphs">s</tspan><tspan x="123.00">:</tspan><tspan x="130.75">1</tspan></text></svg>
<svg style="position:absolute;left:0;top:0;overflow:visible" width="1" height="1"><text y="814" font-family="Liberation Serif" font-size="15" font-weight="bold" fill="#ffffff" transform="translate(0 814) scale(1 1.08) translate(0 -814)"><tspan x="184.30" textLength="8.4" lengthAdjust="spacingAndGlyphs">R</tspan><tspan x="193.90" textLength="7.2" lengthAdjust="spacingAndGlyphs">e</tspan><tspan x="202.90" textLength="7.2" lengthAdjust="spacingAndGlyphs">s</tspan><tspan x="211.75">o</tspan><tspan x="222.42">l</tspan><tspan x="229.33">u</tspan><tspan x="240.00">t</tspan><tspan x="249.42">i</tspan><tspan x="256.75">o</tspan><tspan x="265.33">n</tspan><tspan x="276.00">:</tspan><tspan x="292.75">0</tspan><tspan x="303.62">.</tspan><tspan x="310.75">0</tspan><tspan x="319.75">2</tspan><tspan x="328.75">2</tspan><tspan x="337.75">8</tspan><tspan x="346.75">8</tspan><tspan x="355.75">8</tspan><tspan x="364.75">2</tspan><tspan x="373.30" textLength="8.4" lengthAdjust="spacingAndGlyphs">H</tspan><tspan x="382.90" textLength="7.2" lengthAdjust="spacingAndGlyphs">z</tspan></text></svg>
<svg style="position:absolute;left:0;top:0;overflow:visible" width="1" height="1"><text y="814" font-family="Liberation Serif" font-size="15" font-weight="bold" fill="#ffffff" transform="translate(0 814) scale(1 1.08) translate(0 -814)"><tspan x="598.30" textLength="8.4" lengthAdjust="spacingAndGlyphs">A</tspan><tspan x="616.30" textLength="8.4" lengthAdjust="spacingAndGlyphs">P</tspan><tspan x="625.30" textLength="8.4" lengthAdjust="spacingAndGlyphs">L</tspan><tspan x="635.58">I</tspan><tspan x="643.30" textLength="8.4" lengthAdjust="spacingAndGlyphs">T</tspan><tspan x="652.30" textLength="8.4" lengthAdjust="spacingAndGlyphs">U</tspan><tspan x="661.30" textLength="8.4" lengthAdjust="spacingAndGlyphs">D</tspan><tspan x="670.30" textLength="8.4" lengthAdjust="spacingAndGlyphs">E</tspan><tspan x="688.33">S</tspan><tspan x="697.30" textLength="8.4" lengthAdjust="spacingAndGlyphs">P</tspan><tspan x="706.30" textLength="8.4" lengthAdjust="spacingAndGlyphs">E</tspan><tspan x="715.30" textLength="8.4" lengthAdjust="spacingAndGlyphs">C</tspan><tspan x="724.30" textLength="8.4" lengthAdjust="spacingAndGlyphs">T</tspan><tspan x="733.30" textLength="8.4" lengthAdjust="spacingAndGlyphs">R</tspan><tspan x="742.30" textLength="8.4" lengthAdjust="spacingAndGlyphs">U</tspan><tspan x="771.42">i</tspan><tspan x="778.33">n</tspan><tspan x="796.33">d</tspan><tspan x="805.30" textLength="8.4" lengthAdjust="spacingAndGlyphs">B</tspan><tspan x="814.30" textLength="8.4" lengthAdjust="spacingAndGlyphs">F</tspan><tspan x="823.33">S</tspan></text></svg>
<svg style="position:absolute;left:0;top:0;overflow:visible" width="1" height="1"><text y="814" font-family="Liberation Serif" font-size="15" font-weight="bold" fill="#ffffff" transform="translate(0 814) scale(1 1.08) translate(0 -814)"><tspan x="1157.30" textLength="8.4" lengthAdjust="spacingAndGlyphs">A</tspan><tspan x="1166.75">v</tspan><tspan x="1175.90" textLength="7.2" lengthAdjust="spacingAndGlyphs">e</tspan><tspan x="1185.17">r</tspan><tspan x="1193.75">a</tspan><tspan x="1202.75">g</tspan><tspan x="1211.90" textLength="7.2" lengthAdjust="spacingAndGlyphs">e</tspan><tspan x="1220.33">d</tspan><tspan x="1238.30" textLength="8.4" lengthAdjust="spacingAndGlyphs">F</tspan><tspan x="1248.17">r</tspan><tspan x="1256.75">a</tspan><tspan x="1265.30" textLength="8.4" lengthAdjust="spacingAndGlyphs">m</tspan><tspan x="1274.90" textLength="7.2" lengthAdjust="spacingAndGlyphs">e</tspan><tspan x="1283.90" textLength="7.2" lengthAdjust="spacingAndGlyphs">s</tspan><tspan x="1294.00">:</tspan><tspan x="1310.75">5</tspan></text></svg>
<div style="left:608px;top:803px;width:7px;height:11px;background:#fff;"></div>
<div style="left:752px;top:803px;width:7px;height:11px;background:#fff;"></div>
<div style="left:1157.00px;top:801.50px;font-family:'Liberation Mono',monospace;font-size:15px;line-height:15px;white-space:pre;color:#fff;font-weight:bold;">Averaged Frames: 5</div>
<div style="left:1413px;top:185px;width:242px;height:557px;background:#f0f0f0;box-shadow:0 1px 7px rgba(0,0,0,0.45);"></div>
<div style="left:1413px;top:185px;width:242px;height:25px;background:#fff;"></div>
<svg style="position:absolute;left:1416px;top:189px;overflow:visible" width="16" height="16" viewBox="0 0 16 16"><rect width="16" height="16" fill="#ffff00"/><path d="M0 4.5 H1 V1.5 H5 V4.5 H9 V1.5 H13 V4.5 H16" stroke="#ff0000" fill="none"/><path d="M0.5 9 V6.5 H4.5 V9 H7.5 V6.5 H11.5 V9 H14.5 V6.5 H16" stroke="#00d000" fill="none"/><path d="M0 15 L3 11 L6 15 L9 11 L12 15 L15 11" stroke="#0000ff" fill="none"/></svg>
<div style="left:1437.00px;top:190.84px;font-family:'Liberation Sans',sans-serif;font-size:12px;line-height:12px;white-space:pre;color:#999;">Signal Gener...</div>
<div style="left:1536px;top:197px;width:11px;height:1px;background:#999;"></div>
<div style="left:1581px;top:193px;width:10px;height:10px;border:1px solid #ddd;box-sizing:border-box;"></div>
<svg style="position:absolute;left:1627px;top:192px;overflow:visible" width="11" height="11" viewBox="0 0 11 11"><path d="M0.5 0.5 L10.5 10.5 M10.5 0.5 L0.5 10.5" stroke="#999" stroke-width="1"/></svg>
<div style="left:1413px;top:210px;width:242px;height:532px;background:#f0f0f0;"></div>
<div style="left:1418px;top:218px;width:13px;height:13px;background:#fff;box-shadow:inset 1px 1px 0 #868686, inset 2px 2px 0 #696969, inset -1px -1px 0 #fff, inset -2px -2px 0 #e3e3e3;"></div>
<svg style="position:absolute;left:1421px;top:221px;overflow:visible" width="7" height="7" viewBox="0 0 7 7"><path d="M0 2.5 L2.5 5 L7 0.5 L7 2.5 L2.5 7 L0 4.5 Z" fill="#000"/></svg>
<div style="left:1436.00px;top:220.11px;font-family:'Liberation Sans',sans-serif;font-size:10.5px;line-height:10.5px;white-space:pre;color:#000;">Show Editor</div>
<div style="left:1499px;top:215px;width:126px;height:20px;background:#fff;box-shadow:inset 1px 1px 0 #868686, inset 2px 2px 0 #696969, inset -1px 0 0 #fff;"></div>
<div style="left:1608px;top:217px;width:16px;height:18px;background:#f0f0f0;box-shadow:inset 1px 1px 0 #e3e3e3, inset 2px 2px 0 #fff, inset -1px -1px 0 #696969, inset -2px -2px 0 #a0a0a0;box-sizing:border-box;"></div>
<svg style="position:absolute;left:1612.5px;top:224.0px" width="7" height="4"><path d="M0 0H7L3.5 4Z" fill="#000"/></svg>
<div style="left:1503.00px;top:220.61px;font-family:'Liberation Sans',sans-serif;font-size:10.5px;line-height:10.5px;white-space:pre;color:#000;">No Loopback</div>
<div style="left:1628px;top:213px;width:24px;height:23px;background:#f0f0f0;box-shadow:inset 1px 1px 0 #e3e3e3, inset 2px 2px 0 #fff, inset -1px -1px 0 #696969, inset -2px -2px 0 #a0a0a0;box-sizing:border-box;"></div>
<div style="left:1635px;top:219px;width:10px;height:10px;background:#00ff00;"></div>
<div style="left:1417.00px;top:246.11px;font-family:'Liberation Sans',sans-serif;font-size:10.5px;line-height:10.5px;white-space:pre;color:#a0a0a0;">Start OSC after (s)</div>
<div style="left:1508px;top:242px;width:67px;height:18px;background:#f0f0f0;border-style:solid;border-width:0;box-shadow:inset 1px 1px 0 #868686, inset 2px 2px 0 #696969, inset -1px -1px 0 #fff, inset -2px -2px 0 #e3e3e3;box-sizing:border-box;"></div>
<div style="left:1512.00px;top:245.61px;font-family:'Liberation Sans',sans-serif;font-size:10.5px;line-height:10.5px;white-space:pre;color:#a0a0a0;">0</div>
<div style="left:1578px;top:244px;width:13px;height:13px;background:#f0f0f0;box-shadow:inset 1px 1px 0 #868686, inset 2px 2px 0 #696969, inset -1px -1px 0 #fff, inset -2px -2px 0 #e3e3e3;"></div>
<div style="left:1597.00px;top:246.11px;font-family:'Liberation Sans',sans-serif;font-size:10.5px;line-height:10.5px;white-space:pre;color:#a0a0a0;">Echo Only</div>
<div style="left:1415px;top:274px;width:209px;height:36px;border:1px solid #a0a0a0;box-shadow:inset 1px 1px 0 #fff, 1px 1px 0 #fff;box-sizing:border-box;"></div>
<div style="left:1421px;top:268px;width:100px;height:10px;background:#f0f0f0;"></div>
<div style="left:1424.00px;top:268.61px;font-family:'Liberation Sans',sans-serif;font-size:10.5px;line-height:10.5px;white-space:pre;color:#000;">Sampling Parameters</div>
<div style="left:1421px;top:284px;width:99px;height:19px;background:#fff;box-shadow:inset 1px 1px 0 #868686, inset 2px 2px 0 #696969, inset -1px 0 0 #fff;"></div>
<div style="left:1503px;top:286px;width:16px;height:17px;background:#f0f0f0;box-shadow:inset 1px 1px 0 #e3e3e3, inset 2px 2px 0 #fff, inset -1px -1px 0 #696969, inset -2px -2px 0 #a0a0a0;box-sizing:border-box;"></div>
<svg style="position:absolute;left:1507.5px;top:292.5px" width="7" height="4"><path d="M0 0H7L3.5 4Z" fill="#000"/></svg>
<div style="left:1425.00px;top:288.61px;font-family:'Liberation Sans',sans-serif;font-size:10.5px;line-height:10.5px;white-space:pre;color:#000;">48kHz</div>
<div style="left:1524px;top:284px;width:42px;height:19px;background:#fff;box-shadow:inset 1px 1px 0 #868686, inset 2px 2px 0 #696969, inset -1px 0 0 #fff;"></div>
<div style="left:1549px;top:286px;width:16px;height:17px;background:#f0f0f0;box-shadow:inset 1px 1px 0 #e3e3e3, inset 2px 2px 0 #fff, inset -1px -1px 0 #696969, inset -2px -2px 0 #a0a0a0;box-sizing:border-box;"></div>
<svg style="position:absolute;left:1553.5px;top:292.5px" width="7" height="4"><path d="M0 0H7L3.5 4Z" fill="#000"/></svg>
<div style="left:1528.00px;top:288.61px;font-family:'Liberation Sans',sans-serif;font-size:10.5px;line-height:10.5px;white-space:pre;color:#000;">A&amp;B</div>
<div style="left:1569px;top:284px;width:51px;height:19px;background:#fff;box-shadow:inset 1px 1px 0 #868686, inset 2px 2px 0 #696969, inset -1px 0 0 #fff;"></div>
<div style="left:1603px;top:286px;width:16px;height:17px;background:#f0f0f0;box-shadow:inset 1px 1px 0 #e3e3e3, inset 2px 2px 0 #fff, inset -1px -1px 0 #696969, inset -2px -2px 0 #a0a0a0;box-sizing:border-box;"></div>
<svg style="position:absolute;left:1607.5px;top:292.5px" width="7" height="4"><path d="M0 0H7L3.5 4Z" fill="#000"/></svg>
<div style="left:1573.00px;top:288.61px;font-family:'Liberation Sans',sans-serif;font-size:10.5px;line-height:10.5px;white-space:pre;color:#000;">24Bit</div>
<div style="left:1628px;top:268px;width:24px;height:21px;background:#f0f0f0;box-shadow:inset 1px 1px 0 #e3e3e3, inset 2px 2px 0 #fff, inset -1px -1px 0 #696969, inset -2px -2px 0 #a0a0a0;box-sizing:border-box;"></div>
<svg style="position:absolute;left:1632px;top:272px;overflow:visible" width="16" height="14" viewBox="0 0 16 14"><rect x="0" y="0" width="14" height="14" fill="#a0a0a0" rx="1"/><rect x="3" y="1" width="8" height="5" fill="#fff"/><rect x="9" y="9" width="2" height="3" fill="#fff"/></svg>
<div style="left:1628px;top:292px;width:24px;height:22px;background:#f0f0f0;box-shadow:inset 1px 1px 0 #e3e3e3, inset 2px 2px 0 #fff, inset -1px -1px 0 #696969, inset -2px -2px 0 #a0a0a0;box-sizing:border-box;"></div>
<svg style="position:absolute;left:1631px;top:295px;overflow:visible" width="18" height="16" viewBox="0 0 18 16"><path d="M1 3.5 H17 M1 6.5 H17 M1 9.5 H17 M1 12.5 H17" stroke="#808080" stroke-width="0.8"/><path d="M3.5 13 V5 L14.5 3 V11" stroke="#ff0000" stroke-width="1.3" fill="none"/><circle cx="2.8" cy="13" r="1.6" fill="#ff0000"/><circle cx="13.8" cy="11" r="1.6" fill="#ff0000"/></svg>
<div style="left:1424px;top:321px;width:85px;height:20px;background:#fff;box-shadow:inset 1px 1px 0 #868686, inset 2px 2px 0 #696969, inset -1px 0 0 #fff;"></div>
<div style="left:1492px;top:323px;width:16px;height:18px;background:#f0f0f0;box-shadow:inset 1px 1px 0 #e3e3e3, inset 2px 2px 0 #fff, inset -1px -1px 0 #696969, inset -2px -2px 0 #a0a0a0;box-sizing:border-box;"></div>
<svg style="position:absolute;left:1496.5px;top:330.0px" width="7" height="4"><path d="M0 0H7L3.5 4Z" fill="#000"/></svg>
<div style="left:1428.00px;top:326.61px;font-family:'Liberation Sans',sans-serif;font-size:10.5px;line-height:10.5px;white-space:pre;color:#000;">Sine</div>
<div style="left:1521px;top:321px;width:23px;height:20px;background:#f0f0f0;box-shadow:inset 1px 1px 0 #e3e3e3, inset 2px 2px 0 #fff, inset -1px -1px 0 #696969, inset -2px -2px 0 #a0a0a0;box-sizing:border-box;"></div>
<div style="left:1521.00px;top:327.11px;font-family:'Liberation Sans',sans-serif;font-size:10.5px;line-height:10.5px;white-space:pre;width:23px;text-align:center;color:#000;">...</div>
<div style="left:1557px;top:321px;width:85px;height:20px;background:#fff;box-shadow:inset 1px 1px 0 #868686, inset 2px 2px 0 #696969, inset -1px 0 0 #fff;"></div>
<div style="left:1625px;top:323px;width:16px;height:18px;background:#f0f0f0;box-shadow:inset 1px 1px 0 #e3e3e3, inset 2px 2px 0 #fff, inset -1px -1px 0 #696969, inset -2px -2px 0 #a0a0a0;box-sizing:border-box;"></div>
<svg style="position:absolute;left:1629.5px;top:330.0px" width="7" height="4"><path d="M0 0H7L3.5 4Z" fill="#000"/></svg>
<div style="left:1561.00px;top:326.61px;font-family:'Liberation Sans',sans-serif;font-size:10.5px;line-height:10.5px;white-space:pre;color:#000;">Sine</div>
<div style="left:1416px;top:351px;width:61px;height:19px;background:#fff;border-style:solid;border-width:0;box-shadow:inset 1px 1px 0 #868686, inset 2px 2px 0 #696969, inset -1px -1px 0 #fff, inset -2px -2px 0 #e3e3e3;box-sizing:border-box;"></div>
<div style="left:1420.00px;top:355.61px;font-family:'Liberation Sans',sans-serif;font-size:10.5px;line-height:10.5px;white-space:pre;color:#000;">0</div>
<div style="left:1479px;top:348px;width:17px;height:11px;background:#f0f0f0;box-shadow:inset 1px 1px 0 #e3e3e3, inset 2px 2px 0 #fff, inset -1px -1px 0 #696969, inset -2px -2px 0 #a0a0a0;box-sizing:border-box;"></div>
<div style="left:1479px;top:359px;width:17px;height:11px;background:#f0f0f0;box-shadow:inset 1px 1px 0 #e3e3e3, inset 2px 2px 0 #fff, inset -1px -1px 0 #696969, inset -2px -2px 0 #a0a0a0;box-sizing:border-box;"></div>
<svg style="position:absolute;left:1485px;top:352px;overflow:visible" width="5" height="14" viewBox="0 0 5 14"><path d="M2.5 0 L5 3 L0 3 Z" fill="#000"/><path d="M0 11 L5 11 L2.5 14 Z" fill="#000"/></svg>
<div style="left:1503.00px;top:356.81px;font-family:'Liberation Sans',sans-serif;font-size:10.5px;line-height:10.5px;white-space:pre;color:#000;">DC Offset (V)</div>
<div style="left:1572px;top:351px;width:61px;height:19px;background:#fff;border-style:solid;border-width:0;box-shadow:inset 1px 1px 0 #868686, inset 2px 2px 0 #696969, inset -1px -1px 0 #fff, inset -2px -2px 0 #e3e3e3;box-sizing:border-box;"></div>
<div style="left:1576.00px;top:355.61px;font-family:'Liberation Sans',sans-serif;font-size:10.5px;line-height:10.5px;white-space:pre;color:#000;">0</div>
<div style="left:1635px;top:348px;width:17px;height:11px;background:#f0f0f0;box-shadow:inset 1px 1px 0 #e3e3e3, inset 2px 2px 0 #fff, inset -1px -1px 0 #696969, inset -2px -2px 0 #a0a0a0;box-sizing:border-box;"></div>
<div style="left:1635px;top:359px;width:17px;height:11px;background:#f0f0f0;box-shadow:inset 1px 1px 0 #e3e3e3, inset 2px 2px 0 #fff, inset -1px -1px 0 #696969, inset -2px -2px 0 #a0a0a0;box-sizing:border-box;"></div>
<svg style="position:absolute;left:1641px;top:352px;overflow:visible" width="5" height="14" viewBox="0 0 5 14"><path d="M2.5 0 L5 3 L0 3 Z" fill="#000"/><path d="M0 11 L5 11 L2.5 14 Z" fill="#000"/></svg>
<div style="left:1479.00px;top:377.91px;font-family:'Liberation Sans',sans-serif;font-size:10.5px;line-height:10.5px;white-space:pre;color:#000;">Output Frequency (Hz)</div>
<div style="left:1448px;top:396px;width:87px;height:19px;background:#fff;box-shadow:inset 1px 1px 0 #868686, inset 2px 2px 0 #696969, inset -1px 0 0 #fff;"></div>
<div style="left:1518px;top:398px;width:16px;height:17px;background:#f0f0f0;box-shadow:inset 1px 1px 0 #e3e3e3, inset 2px 2px 0 #fff, inset -1px -1px 0 #696969, inset -2px -2px 0 #a0a0a0;box-sizing:border-box;"></div>
<svg style="position:absolute;left:1522.5px;top:404.5px" width="7" height="4"><path d="M0 0H7L3.5 4Z" fill="#000"/></svg>
<div style="left:1452.00px;top:400.61px;font-family:'Liberation Sans',sans-serif;font-size:10.5px;line-height:10.5px;white-space:pre;color:#000;">1000</div>
<div style="left:1537px;top:396px;width:86px;height:19px;background:#fff;box-shadow:inset 1px 1px 0 #868686, inset 2px 2px 0 #696969, inset -1px 0 0 #fff;"></div>
<div style="left:1606px;top:398px;width:16px;height:17px;background:#f0f0f0;box-shadow:inset 1px 1px 0 #e3e3e3, inset 2px 2px 0 #fff, inset -1px -1px 0 #696969, inset -2px -2px 0 #a0a0a0;box-sizing:border-box;"></div>
<svg style="position:absolute;left:1610.5px;top:404.5px" width="7" height="4"><path d="M0 0H7L3.5 4Z" fill="#000"/></svg>
<div style="left:1541.00px;top:400.61px;font-family:'Liberation Sans',sans-serif;font-size:10.5px;line-height:10.5px;white-space:pre;color:#000;">1000</div>
<div style="left:1481.00px;top:427.11px;font-family:'Liberation Sans',sans-serif;font-size:10.5px;line-height:10.5px;white-space:pre;color:#000;">Output Amplitude (V)</div>
<div style="left:1448px;top:447px;width:87px;height:19px;background:#fff;box-shadow:inset 1px 1px 0 #868686, inset 2px 2px 0 #696969, inset -1px 0 0 #fff;"></div>
<div style="left:1518px;top:449px;width:16px;height:17px;background:#f0f0f0;box-shadow:inset 1px 1px 0 #e3e3e3, inset 2px 2px 0 #fff, inset -1px -1px 0 #696969, inset -2px -2px 0 #a0a0a0;box-sizing:border-box;"></div>
<svg style="position:absolute;left:1522.5px;top:455.5px" width="7" height="4"><path d="M0 0H7L3.5 4Z" fill="#000"/></svg>
<div style="left:1452.00px;top:451.61px;font-family:'Liberation Sans',sans-serif;font-size:10.5px;line-height:10.5px;white-space:pre;color:#000;">1</div>
<div style="left:1537px;top:447px;width:86px;height:19px;background:#fff;box-shadow:inset 1px 1px 0 #868686, inset 2px 2px 0 #696969, inset -1px 0 0 #fff;"></div>
<div style="left:1606px;top:449px;width:16px;height:17px;background:#f0f0f0;box-shadow:inset 1px 1px 0 #e3e3e3, inset 2px 2px 0 #fff, inset -1px -1px 0 #696969, inset -2px -2px 0 #a0a0a0;box-sizing:border-box;"></div>
<svg style="position:absolute;left:1610.5px;top:455.5px" width="7" height="4"><path d="M0 0H7L3.5 4Z" fill="#000"/></svg>
<div style="left:1541.00px;top:451.61px;font-family:'Liberation Sans',sans-serif;font-size:10.5px;line-height:10.5px;white-space:pre;color:#000;">1</div>
<div style="left:1452.00px;top:478.31px;font-family:'Liberation Sans',sans-serif;font-size:10.5px;line-height:10.5px;white-space:pre;color:#000;">Output Phase Difference (Degree)</div>
<div style="left:1496px;top:498px;width:73px;height:19px;background:#fff;box-shadow:inset 1px 1px 0 #868686, inset 2px 2px 0 #696969, inset -1px 0 0 #fff;"></div>
<div style="left:1552px;top:500px;width:16px;height:17px;background:#f0f0f0;box-shadow:inset 1px 1px 0 #e3e3e3, inset 2px 2px 0 #fff, inset -1px -1px 0 #696969, inset -2px -2px 0 #a0a0a0;box-sizing:border-box;"></div>
<svg style="position:absolute;left:1556.5px;top:506.5px" width="7" height="4"><path d="M0 0H7L3.5 4Z" fill="#000"/></svg>
<div style="left:1500.00px;top:502.61px;font-family:'Liberation Sans',sans-serif;font-size:10.5px;line-height:10.5px;white-space:pre;color:#000;">0</div>
<div style="left:1421px;top:384px;width:2px;height:133px;background:#a0a0a0;border-right:1px solid #fff;"></div>
<div style="left:1421px;top:384px;width:1px;height:133px;background:#696969;"></div>
<div style="left:1436px;top:384px;width:2px;height:133px;background:#a0a0a0;border-right:1px solid #fff;"></div>
<div style="left:1436px;top:384px;width:1px;height:133px;background:#696969;"></div>
<div style="left:1630px;top:384px;width:2px;height:133px;background:#a0a0a0;border-right:1px solid #fff;"></div>
<div style="left:1630px;top:384px;width:1px;height:133px;background:#696969;"></div>
<div style="left:1644px;top:384px;width:2px;height:133px;background:#a0a0a0;border-right:1px solid #fff;"></div>
<div style="left:1644px;top:384px;width:1px;height:133px;background:#696969;"></div>
<div style="left:1418px;top:508px;width:11px;height:5px;background:#f0f0f0;box-shadow:inset 1px 1px 0 #fff, inset -1px -1px 0 #696969;"></div>
<div style="left:1433px;top:504px;width:11px;height:5px;background:#f0f0f0;box-shadow:inset 1px 1px 0 #fff, inset -1px -1px 0 #696969;"></div>
<div style="left:1627px;top:504px;width:11px;height:5px;background:#f0f0f0;box-shadow:inset 1px 1px 0 #fff, inset -1px -1px 0 #696969;"></div>
<div style="left:1640px;top:508px;width:11px;height:5px;background:#f0f0f0;box-shadow:inset 1px 1px 0 #fff, inset -1px -1px 0 #696969;"></div>
<div style="left:1421px;top:512px;width:1px;height:6px;background:#696969;"></div>
<div style="left:1436px;top:508px;width:1px;height:10px;background:#696969;"></div>
<div style="left:1630px;top:508px;width:1px;height:10px;background:#696969;"></div>
<div style="left:1644px;top:512px;width:1px;height:6px;background:#696969;"></div>
<div style="left:1416.00px;top:523.51px;font-family:'Liberation Sans',sans-serif;font-size:10.5px;line-height:10.5px;white-space:pre;color:#000;">-3.01dBV</div>
<div style="left:1605.00px;top:523.51px;font-family:'Liberation Sans',sans-serif;font-size:10.5px;line-height:10.5px;white-space:pre;color:#000;">-3.01dBV</div>
<div style="left:1471px;top:527px;width:121px;height:3px;background:#a0a0a0;box-shadow:inset 1px 1px 0 #696969, inset -1px -1px 0 #fff;"></div>
<div style="left:1530px;top:524px;width:6px;height:10px;background:#f0f0f0;box-shadow:inset 1px 1px 0 #fff, inset -1px -1px 0 #696969;"></div>
<div style="left:1415px;top:541px;width:238px;height:47px;border:1px solid #a0a0a0;box-shadow:inset 1px 1px 0 #fff, 1px 1px 0 #fff;box-sizing:border-box;"></div>
<div style="left:1422px;top:547px;width:13px;height:13px;background:#fff;box-shadow:inset 1px 1px 0 #868686, inset 2px 2px 0 #696969, inset -1px -1px 0 #fff, inset -2px -2px 0 #e3e3e3;"></div>
<div style="left:1441.00px;top:548.71px;font-family:'Liberation Sans',sans-serif;font-size:10.5px;line-height:10.5px;white-space:pre;color:#000;">Mask</div>
<div style="left:1522.00px;top:549.61px;font-family:'Liberation Sans',sans-serif;font-size:10.5px;line-height:10.5px;white-space:pre;color:#a0a0a0;">On (s)</div>
<div style="left:1597.00px;top:549.61px;font-family:'Liberation Sans',sans-serif;font-size:10.5px;line-height:10.5px;white-space:pre;color:#a0a0a0;">Off (s)</div>
<div style="left:1422px;top:567px;width:13px;height:13px;background:#f0f0f0;box-shadow:inset 1px 1px 0 #868686, inset 2px 2px 0 #696969, inset -1px -1px 0 #fff, inset -2px -2px 0 #e3e3e3;"></div>
<svg style="position:absolute;left:1425px;top:570px;overflow:visible" width="7" height="7" viewBox="0 0 7 7"><path d="M0 2.5 L2.5 5 L7 0.5 L7 2.5 L2.5 7 L0 4.5 Z" fill="#a0a0a0"/></svg>
<div style="left:1441.00px;top:568.81px;font-family:'Liberation Sans',sans-serif;font-size:10.5px;line-height:10.5px;white-space:pre;color:#a0a0a0;">Phase Lock</div>
<div style="left:1508px;top:565px;width:65px;height:19px;background:#f0f0f0;border-style:solid;border-width:0;box-shadow:inset 1px 1px 0 #868686, inset 2px 2px 0 #696969, inset -1px -1px 0 #fff, inset -2px -2px 0 #e3e3e3;box-sizing:border-box;"></div>
<div style="left:1512.00px;top:569.61px;font-family:'Liberation Sans',sans-serif;font-size:10.5px;line-height:10.5px;white-space:pre;color:#a0a0a0;">1</div>
<div style="left:1581px;top:565px;width:65px;height:19px;background:#f0f0f0;border-style:solid;border-width:0;box-shadow:inset 1px 1px 0 #868686, inset 2px 2px 0 #696969, inset -1px -1px 0 #fff, inset -2px -2px 0 #e3e3e3;box-sizing:border-box;"></div>
<div style="left:1585.00px;top:569.61px;font-family:'Liberation Sans',sans-serif;font-size:10.5px;line-height:10.5px;white-space:pre;color:#a0a0a0;">0</div>
<div style="left:1415px;top:593px;width:238px;height:44px;border:1px solid #a0a0a0;box-shadow:inset 1px 1px 0 #fff, 1px 1px 0 #fff;box-sizing:border-box;"></div>
<div style="left:1422px;top:608px;width:13px;height:13px;background:#fff;box-shadow:inset 1px 1px 0 #868686, inset 2px 2px 0 #696969, inset -1px -1px 0 #fff, inset -2px -2px 0 #e3e3e3;"></div>
<div style="left:1441.00px;top:609.91px;font-family:'Liberation Sans',sans-serif;font-size:10.5px;line-height:10.5px;white-space:pre;color:#000;">Fade</div>
<div style="left:1522.00px;top:599.51px;font-family:'Liberation Sans',sans-serif;font-size:10.5px;line-height:10.5px;white-space:pre;color:#a0a0a0;">In (s)</div>
<div style="left:1597.00px;top:599.51px;font-family:'Liberation Sans',sans-serif;font-size:10.5px;line-height:10.5px;white-space:pre;color:#a0a0a0;">Out (s)</div>
<div style="left:1508px;top:615px;width:65px;height:19px;background:#f0f0f0;border-style:solid;border-width:0;box-shadow:inset 1px 1px 0 #868686, inset 2px 2px 0 #696969, inset -1px -1px 0 #fff, inset -2px -2px 0 #e3e3e3;box-sizing:border-box;"></div>
<div style="left:1512.00px;top:619.61px;font-family:'Liberation Sans',sans-serif;font-size:10.5px;line-height:10.5px;white-space:pre;color:#a0a0a0;">0.01</div>
<div style="left:1581px;top:615px;width:65px;height:19px;background:#f0f0f0;border-style:solid;border-width:0;box-shadow:inset 1px 1px 0 #868686, inset 2px 2px 0 #696969, inset -1px -1px 0 #fff, inset -2px -2px 0 #e3e3e3;box-sizing:border-box;"></div>
<div style="left:1585.00px;top:619.61px;font-family:'Liberation Sans',sans-serif;font-size:10.5px;line-height:10.5px;white-space:pre;color:#a0a0a0;">0.01</div>
<div style="left:1415px;top:644px;width:238px;height:45px;border:1px solid #a0a0a0;box-shadow:inset 1px 1px 0 #fff, 1px 1px 0 #fff;box-sizing:border-box;"></div>
<div style="left:1419.00px;top:648.71px;font-family:'Liberation Sans',sans-serif;font-size:10.5px;line-height:10.5px;white-space:pre;color:#000;">Modulation</div>
<div style="left:1491.50px;top:648.71px;font-family:'Liberation Sans',sans-serif;font-size:10.5px;line-height:10.5px;white-space:pre;color:#a0a0a0;">Carrier (Hz)</div>
<div style="left:1566.60px;top:648.71px;font-family:'Liberation Sans',sans-serif;font-size:10.5px;line-height:10.5px;white-space:pre;color:#a0a0a0;">Mod. Index (%)</div>
<div style="left:1418px;top:666px;width:57px;height:19px;background:#fff;box-shadow:inset 1px 1px 0 #868686, inset 2px 2px 0 #696969, inset -1px 0 0 #fff;"></div>
<div style="left:1458px;top:668px;width:16px;height:17px;background:#f0f0f0;box-shadow:inset 1px 1px 0 #e3e3e3, inset 2px 2px 0 #fff, inset -1px -1px 0 #696969, inset -2px -2px 0 #a0a0a0;box-sizing:border-box;"></div>
<svg style="position:absolute;left:1462.5px;top:674.5px" width="7" height="4"><path d="M0 0H7L3.5 4Z" fill="#000"/></svg>
<div style="left:1422.00px;top:670.61px;font-family:'Liberation Sans',sans-serif;font-size:10.5px;line-height:10.5px;white-space:pre;color:#000;">NIL</div>
<div style="left:1491px;top:666px;width:65px;height:19px;background:#f0f0f0;border-style:solid;border-width:0;box-shadow:inset 1px 1px 0 #868686, inset 2px 2px 0 #696969, inset -1px -1px 0 #fff, inset -2px -2px 0 #e3e3e3;box-sizing:border-box;"></div>
<div style="left:1495.00px;top:670.61px;font-family:'Liberation Sans',sans-serif;font-size:10.5px;line-height:10.5px;white-space:pre;color:#a0a0a0;">0</div>
<div style="left:1572px;top:666px;width:65px;height:19px;background:#f0f0f0;border-style:solid;border-width:0;box-shadow:inset 1px 1px 0 #868686, inset 2px 2px 0 #696969, inset -1px -1px 0 #fff, inset -2px -2px 0 #e3e3e3;box-sizing:border-box;"></div>
<div style="left:1576.00px;top:670.61px;font-family:'Liberation Sans',sans-serif;font-size:10.5px;line-height:10.5px;white-space:pre;color:#a0a0a0;">0</div>
<div style="left:1416.00px;top:699.41px;font-family:'Liberation Sans',sans-serif;font-size:10.5px;line-height:10.5px;white-space:pre;color:#000;">Duration (s)</div>
<div style="left:1479px;top:696px;width:65px;height:20px;background:#f0f0f0;border-style:solid;border-width:0;box-shadow:inset 1px 1px 0 #868686, inset 2px 2px 0 #696969, inset -1px -1px 0 #fff, inset -2px -2px 0 #e3e3e3;box-sizing:border-box;"></div>
<div style="left:1483.00px;top:701.61px;font-family:'Liberation Sans',sans-serif;font-size:10.5px;line-height:10.5px;white-space:pre;color:#a0a0a0;">1</div>
<div style="left:1551px;top:699px;width:13px;height:13px;background:#fff;box-shadow:inset 1px 1px 0 #868686, inset 2px 2px 0 #696969, inset -1px -1px 0 #fff, inset -2px -2px 0 #e3e3e3;"></div>
<svg style="position:absolute;left:1554px;top:702px;overflow:visible" width="7" height="7" viewBox="0 0 7 7"><path d="M0 2.5 L2.5 5 L7 0.5 L7 2.5 L2.5 7 L0 4.5 Z" fill="#000"/></svg>
<div style="left:1569.30px;top:700.71px;font-family:'Liberation Sans',sans-serif;font-size:10.5px;line-height:10.5px;white-space:pre;color:#000;">Loop</div>
<div style="left:1607px;top:699px;width:13px;height:13px;background:#f0f0f0;box-shadow:inset 1px 1px 0 #868686, inset 2px 2px 0 #696969, inset -1px -1px 0 #fff, inset -2px -2px 0 #e3e3e3;"></div>
<div style="left:1626.00px;top:700.71px;font-family:'Liberation Sans',sans-serif;font-size:10.5px;line-height:10.5px;white-space:pre;color:#a0a0a0;">DDS</div>
<div style="left:1415px;top:723px;width:13px;height:13px;background:#fff;box-shadow:inset 1px 1px 0 #868686, inset 2px 2px 0 #696969, inset -1px -1px 0 #fff, inset -2px -2px 0 #e3e3e3;"></div>
<div style="left:1433.30px;top:724.81px;font-family:'Liberation Sans',sans-serif;font-size:10.5px;line-height:10.5px;white-space:pre;color:#000;">Sweep</div>
<svg style="position:absolute;left:1492px;top:723px;overflow:visible" width="12" height="12" viewBox="0 0 12 12"><path d="M10.2 1.8 A5.5 5.5 0 0 0 1.8 10.2" stroke="#a0a0a0" fill="none"/><path d="M9.5 2.5 A4.5 4.5 0 0 0 2.5 9.5" stroke="#696969" fill="none"/><path d="M1.8 10.2 A5.5 5.5 0 0 0 10.2 1.8" stroke="#fff" fill="none"/><circle cx="6" cy="6" r="3.8" fill="#f0f0f0"/><circle cx="6" cy="6" r="2" fill="#a0a0a0"/></svg>
<div style="left:1509.20px;top:724.71px;font-family:'Liberation Sans',sans-serif;font-size:10.5px;line-height:10.5px;white-space:pre;color:#a0a0a0;">Frequency</div>
<svg style="position:absolute;left:1573px;top:723px;overflow:visible" width="12" height="12" viewBox="0 0 12 12"><path d="M10.2 1.8 A5.5 5.5 0 0 0 1.8 10.2" stroke="#a0a0a0" fill="none"/><path d="M9.5 2.5 A4.5 4.5 0 0 0 2.5 9.5" stroke="#696969" fill="none"/><path d="M1.8 10.2 A5.5 5.5 0 0 0 10.2 1.8" stroke="#fff" fill="none"/><circle cx="6" cy="6" r="3.8" fill="#f0f0f0"/></svg>
<div style="left:1590.00px;top:724.71px;font-family:'Liberation Sans',sans-serif;font-size:10.5px;line-height:10.5px;white-space:pre;color:#a0a0a0;">Amplitude</div>
<div style="left:1px;top:829px;width:1657px;height:1px;background:#fff;"></div>
<div style="left:1px;top:830px;width:1657px;height:24px;background:#f0f0f0;"></div>
<div style="left:1px;top:852px;width:1657px;height:1px;background:#c8c8c8;"></div>
<div style="left:1px;top:853px;width:1657px;height:1px;background:#fff;"></div>
<div style="left:0px;top:854px;width:1659px;height:1px;background:#6b6b6b;"></div>
<div style="left:5px;top:831px;width:1px;height:22px;background:#a0a0a0;"></div>
<div style="left:6px;top:831px;width:1px;height:22px;background:#fff;"></div>
<div style="left:17.00px;top:836.00px;font-family:'Liberation Sans',sans-serif;font-size:13px;line-height:13px;white-space:pre;color:#000;">F</div>
<div style="left:32px;top:831px;width:129px;height:22px;background:#fff;box-shadow:inset 1px 1px 0 #868686, inset 2px 2px 0 #696969, inset -1px 0 0 #fff;"></div>
<div style="left:143px;top:833px;width:17px;height:20px;background:#f0f0f0;box-shadow:inset 1px 1px 0 #e3e3e3, inset 2px 2px 0 #fff, inset -1px -1px 0 #696969, inset -2px -2px 0 #a0a0a0;box-sizing:border-box;"></div>
<svg style="position:absolute;left:148.0px;top:841.0px" width="7" height="4"><path d="M0 0H7L3.5 4Z" fill="#000"/></svg>
<div style="left:36.00px;top:835.68px;font-family:'Liberation Sans',sans-serif;font-size:13px;line-height:13px;white-space:pre;color:#000;letter-spacing:0px;font-weight:bold;">Auto</div>
<div style="left:164px;top:831px;width:100px;height:22px;background:#fff;box-shadow:inset 1px 1px 0 #868686, inset 2px 2px 0 #696969, inset -1px 0 0 #fff;"></div>
<div style="left:246px;top:833px;width:17px;height:20px;background:#f0f0f0;box-shadow:inset 1px 1px 0 #e3e3e3, inset 2px 2px 0 #fff, inset -1px -1px 0 #696969, inset -2px -2px 0 #a0a0a0;box-sizing:border-box;"></div>
<svg style="position:absolute;left:251.0px;top:841.0px" width="7" height="4"><path d="M0 0H7L3.5 4Z" fill="#000"/></svg>
<div style="left:168.00px;top:835.68px;font-family:'Liberation Sans',sans-serif;font-size:13px;line-height:13px;white-space:pre;color:#000;letter-spacing:0px;font-weight:bold;">X1</div>
<div style="left:267.00px;top:836.00px;font-family:'Liberation Sans',sans-serif;font-size:13px;line-height:13px;white-space:pre;color:#000;">A</div>
<div style="left:285px;top:831px;width:129px;height:22px;background:#000;box-shadow:inset 1px 1px 0 #868686, inset 2px 2px 0 #696969, inset -1px 0 0 #fff;"></div>
<div style="left:396px;top:833px;width:17px;height:20px;background:#f0f0f0;box-shadow:inset 1px 1px 0 #e3e3e3, inset 2px 2px 0 #fff, inset -1px -1px 0 #696969, inset -2px -2px 0 #a0a0a0;box-sizing:border-box;"></div>
<svg style="position:absolute;left:401.0px;top:841.0px" width="7" height="4"><path d="M0 0H7L3.5 4Z" fill="#000"/></svg>
<div style="left:289.00px;top:835.68px;font-family:'Liberation Sans',sans-serif;font-size:13px;line-height:13px;white-space:pre;color:#ffff00;letter-spacing:0px;font-weight:bold;">-200dB</div>
<div style="left:418px;top:831px;width:92px;height:22px;background:#000;box-shadow:inset 1px 1px 0 #868686, inset 2px 2px 0 #696969, inset -1px 0 0 #fff;"></div>
<div style="left:492px;top:833px;width:17px;height:20px;background:#f0f0f0;box-shadow:inset 1px 1px 0 #e3e3e3, inset 2px 2px 0 #fff, inset -1px -1px 0 #696969, inset -2px -2px 0 #a0a0a0;box-sizing:border-box;"></div>
<svg style="position:absolute;left:497.0px;top:841.0px" width="7" height="4"><path d="M0 0H7L3.5 4Z" fill="#000"/></svg>
<div style="left:422.00px;top:835.68px;font-family:'Liberation Sans',sans-serif;font-size:13px;line-height:13px;white-space:pre;color:#ffff00;letter-spacing:0px;font-weight:bold;">Off</div>
<div style="left:513.00px;top:836.00px;font-family:'Liberation Sans',sans-serif;font-size:13px;line-height:13px;white-space:pre;color:#000;">M</div>
<div style="left:533px;top:831px;width:264px;height:22px;background:#fff;box-shadow:inset 1px 1px 0 #868686, inset 2px 2px 0 #696969, inset -1px 0 0 #fff;"></div>
<div style="left:779px;top:833px;width:17px;height:20px;background:#f0f0f0;box-shadow:inset 1px 1px 0 #e3e3e3, inset 2px 2px 0 #fff, inset -1px -1px 0 #696969, inset -2px -2px 0 #a0a0a0;box-sizing:border-box;"></div>
<svg style="position:absolute;left:784.0px;top:841.0px" width="7" height="4"><path d="M0 0H7L3.5 4Z" fill="#000"/></svg>
<div style="left:537.00px;top:835.68px;font-family:'Liberation Sans',sans-serif;font-size:13px;line-height:13px;white-space:pre;color:#000;letter-spacing:0px;font-weight:bold;">Amplitude Spectrum</div>
<div style="left:800.00px;top:836.00px;font-family:'Liberation Sans',sans-serif;font-size:13px;line-height:13px;white-space:pre;color:#000;">B</div>
<div style="left:817px;top:831px;width:128px;height:22px;background:#000;box-shadow:inset 1px 1px 0 #868686, inset 2px 2px 0 #696969, inset -1px 0 0 #fff;"></div>
<div style="left:927px;top:833px;width:17px;height:20px;background:#f0f0f0;box-shadow:inset 1px 1px 0 #e3e3e3, inset 2px 2px 0 #fff, inset -1px -1px 0 #696969, inset -2px -2px 0 #a0a0a0;box-sizing:border-box;"></div>
<svg style="position:absolute;left:932.0px;top:841.0px" width="7" height="4"><path d="M0 0H7L3.5 4Z" fill="#a0a0a0"/></svg>
<div style="left:821.00px;top:835.68px;font-family:'Liberation Sans',sans-serif;font-size:13px;line-height:13px;white-space:pre;color:#7a7a7a;letter-spacing:0px;font-weight:bold;">Off</div>
<div style="left:949px;top:831px;width:92px;height:22px;background:#000;box-shadow:inset 1px 1px 0 #868686, inset 2px 2px 0 #696969, inset -1px 0 0 #fff;"></div>
<div style="left:1023px;top:833px;width:17px;height:20px;background:#f0f0f0;box-shadow:inset 1px 1px 0 #e3e3e3, inset 2px 2px 0 #fff, inset -1px -1px 0 #696969, inset -2px -2px 0 #a0a0a0;box-sizing:border-box;"></div>
<svg style="position:absolute;left:1028.0px;top:841.0px" width="7" height="4"><path d="M0 0H7L3.5 4Z" fill="#a0a0a0"/></svg>
<div style="left:953.00px;top:835.68px;font-family:'Liberation Sans',sans-serif;font-size:13px;line-height:13px;white-space:pre;color:#7a7a7a;letter-spacing:0px;font-weight:bold;">Off</div>
<div style="left:1045.00px;top:836.00px;font-family:'Liberation Sans',sans-serif;font-size:13px;line-height:13px;white-space:pre;color:#000;">FFT</div>
<div style="left:1083px;top:831px;width:134px;height:22px;background:#fff;box-shadow:inset 1px 1px 0 #868686, inset 2px 2px 0 #696969, inset -1px 0 0 #fff;"></div>
<div style="left:1199px;top:833px;width:17px;height:20px;background:#f0f0f0;box-shadow:inset 1px 1px 0 #e3e3e3, inset 2px 2px 0 #fff, inset -1px -1px 0 #696969, inset -2px -2px 0 #a0a0a0;box-sizing:border-box;"></div>
<svg style="position:absolute;left:1204.0px;top:841.0px" width="7" height="4"><path d="M0 0H7L3.5 4Z" fill="#000"/></svg>
<div style="left:1087.00px;top:835.68px;font-family:'Liberation Sans',sans-serif;font-size:13px;line-height:13px;white-space:pre;color:#000;letter-spacing:0px;font-weight:bold;">2097152</div>
<div style="left:1220.00px;top:836.00px;font-family:'Liberation Sans',sans-serif;font-size:13px;line-height:13px;white-space:pre;color:#000;">WND</div>
<div style="left:1283px;top:831px;width:255px;height:22px;background:#fff;box-shadow:inset 1px 1px 0 #868686, inset 2px 2px 0 #696969, inset -1px 0 0 #fff;"></div>
<div style="left:1520px;top:833px;width:17px;height:20px;background:#f0f0f0;box-shadow:inset 1px 1px 0 #e3e3e3, inset 2px 2px 0 #fff, inset -1px -1px 0 #696969, inset -2px -2px 0 #a0a0a0;box-sizing:border-box;"></div>
<svg style="position:absolute;left:1525.0px;top:841.0px" width="7" height="4"><path d="M0 0H7L3.5 4Z" fill="#000"/></svg>
<div style="left:1287.00px;top:835.68px;font-family:'Liberation Sans',sans-serif;font-size:13px;line-height:13px;white-space:pre;color:#000;letter-spacing:0px;font-weight:bold;">Kaiser 6</div>
<div style="left:1540px;top:831px;width:108px;height:22px;background:#f0f0f0;box-shadow:inset 1px 1px 0 #868686, inset 2px 2px 0 #696969, inset -1px 0 0 #fff;"></div>
<div style="left:1630px;top:833px;width:17px;height:20px;background:#f0f0f0;box-shadow:inset 1px 1px 0 #e3e3e3, inset 2px 2px 0 #fff, inset -1px -1px 0 #696969, inset -2px -2px 0 #a0a0a0;box-sizing:border-box;"></div>
<svg style="position:absolute;left:1635.0px;top:841.0px" width="7" height="4"><path d="M0 0H7L3.5 4Z" fill="#a0a0a0"/></svg>
<div style="left:1544.00px;top:835.68px;font-family:'Liberation Sans',sans-serif;font-size:13px;line-height:13px;white-space:pre;color:#a0a0a0;letter-spacing:0px;font-weight:bold;">0%</div>
</body></html>
